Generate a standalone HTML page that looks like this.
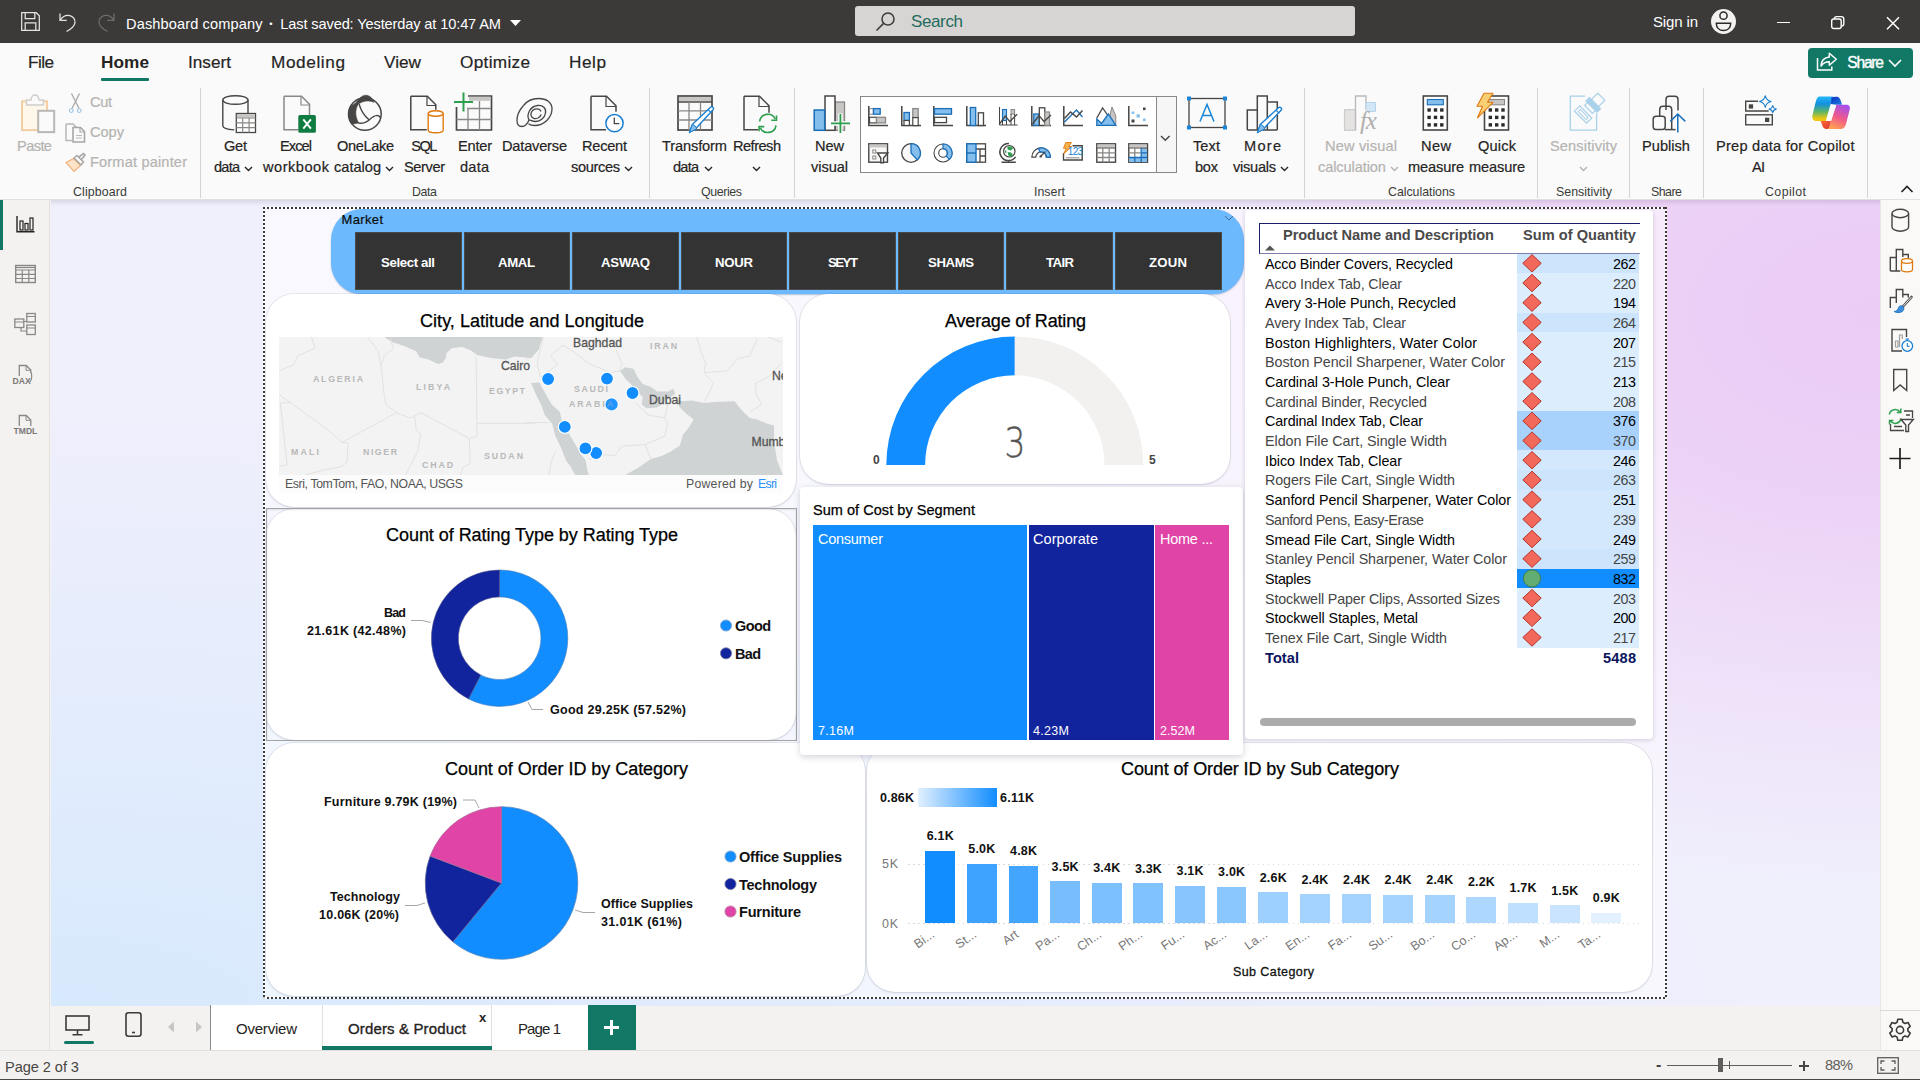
<!DOCTYPE html>
<html lang="en"><head><meta charset="utf-8"><title>Dashboard company - Power BI Desktop</title>
<style>
html,body{margin:0;padding:0;background:#f3f2f1;}
body{width:1920px;height:1080px;overflow:hidden;font-family:"Liberation Sans",sans-serif;}
#app{position:relative;width:1920px;height:1080px;overflow:hidden;background:#f3f2f1;}
#app div,#app span.t,#app svg{position:absolute;box-sizing:border-box;}
span.t{white-space:nowrap;display:block;}
.card{background:#fff;border-radius:28px;box-shadow:0 0 0 .8px rgba(60,60,80,.10),0 1px 2.5px rgba(90,90,120,.16);}
.sep{width:1px;background:#d8d6d4;}
</style></head><body><div id="app">
<div style="left:51px;top:200px;width:1829px;height:805.5px;background:radial-gradient(ellipse 880px 570px at 100% 14%,#ecccf5 0%,rgba(236,204,245,.84) 32%,rgba(236,204,245,.4) 66%,rgba(236,204,245,0) 100%),radial-gradient(ellipse 1700px 600px at 0% 100%,#d7e9fd 0%,rgba(215,233,253,0) 100%),#f0effc;"></div>
<div style="left:51px;top:200px;width:1829px;height:6px;background:linear-gradient(to bottom,rgba(60,60,80,.13),rgba(60,60,80,0));"></div>
<div style="left:263px;top:207px;width:1404px;height:792px;background:rgba(255,255,255,.55);"></div>
<div style="left:263px;top:207px;width:1404px;height:2px;background:repeating-linear-gradient(to right,#3b3a39 0 2px,rgba(255,255,255,.8) 2px 4px);"></div>
<div style="left:263px;top:997px;width:1404px;height:2px;background:repeating-linear-gradient(to right,#3b3a39 0 2px,rgba(255,255,255,.8) 2px 4px);"></div>
<div style="left:263px;top:207px;width:2px;height:792px;background:repeating-linear-gradient(to bottom,#3b3a39 0 2px,rgba(255,255,255,.8) 2px 4px);"></div>
<div style="left:1665px;top:207px;width:2px;height:792px;background:repeating-linear-gradient(to bottom,#3b3a39 0 2px,rgba(255,255,255,.8) 2px 4px);"></div>
<div style="left:330.5px;top:208.5px;width:913.2px;height:85px;background:#6DB9FD;border-radius:31px;box-shadow:0 1px 1.5px rgba(40,90,150,.35);"></div>
<span class="t" style="left:341.5px;top:211.55px;font-size:13px;line-height:16.9px;color:#0b0b0b;letter-spacing:0.353px;-webkit-text-stroke:.2px #0b0b0b;">Market</span>
<svg style="left:1223.5px;top:214.5px" width="10" height="7" viewBox="0 0 10 7" fill="none" stroke="#4d6e92" stroke-width="1"><path d="M1 1l4 4 4-4"/></svg>
<div style="left:355.0px;top:232px;width:106.7px;height:58.3px;background:#333333;border:1px solid #4b4a49;"></div>
<span class="t" style="left:381px;top:254.12px;font-size:13.2px;line-height:17.16px;color:#fff;font-weight:700;letter-spacing:-0.354px;">Select all</span>
<div style="left:463.6px;top:232px;width:106.7px;height:58.3px;background:#333333;border:1px solid #4b4a49;"></div>
<span class="t" style="left:498px;top:254.12px;font-size:13.2px;line-height:17.16px;color:#fff;font-weight:700;letter-spacing:-0.365px;">AMAL</span>
<div style="left:572.1px;top:232px;width:106.7px;height:58.3px;background:#333333;border:1px solid #4b4a49;"></div>
<span class="t" style="left:601px;top:254.12px;font-size:13.2px;line-height:17.16px;color:#fff;font-weight:700;letter-spacing:-0.207px;">ASWAQ</span>
<div style="left:680.7px;top:232px;width:106.7px;height:58.3px;background:#333333;border:1px solid #4b4a49;"></div>
<span class="t" style="left:715px;top:254.12px;font-size:13.2px;line-height:17.16px;color:#fff;font-weight:700;letter-spacing:-0.281px;">NOUR</span>
<div style="left:789.3px;top:232px;width:106.7px;height:58.3px;background:#333333;border:1px solid #4b4a49;"></div>
<span class="t" style="left:828px;top:254.12px;font-size:13.2px;line-height:17.16px;color:#fff;font-weight:700;letter-spacing:-1.484px;">SEYT</span>
<div style="left:897.8px;top:232px;width:106.7px;height:58.3px;background:#333333;border:1px solid #4b4a49;"></div>
<span class="t" style="left:928px;top:254.12px;font-size:13.2px;line-height:17.16px;color:#fff;font-weight:700;letter-spacing:-0.406px;">SHAMS</span>
<div style="left:1006.4px;top:232px;width:106.7px;height:58.3px;background:#333333;border:1px solid #4b4a49;"></div>
<span class="t" style="left:1046px;top:254.12px;font-size:13.2px;line-height:17.16px;color:#fff;font-weight:700;letter-spacing:-0.599px;">TAIR</span>
<div style="left:1115.0px;top:232px;width:106.7px;height:58.3px;background:#333333;border:1px solid #4b4a49;"></div>
<span class="t" style="left:1149px;top:254.12px;font-size:13.2px;line-height:17.16px;color:#fff;font-weight:700;letter-spacing:0.208px;">ZOUN</span>
<div class="card" style="left:266px;top:294.4px;width:530px;height:213px;"></div>
<span class="t" style="left:420px;top:309.5px;font-size:18px;line-height:23.4px;color:#000;letter-spacing:0.043px;-webkit-text-stroke:.25px #000;">City, Latitude and Longitude</span>
<svg style="left:279px;top:337px" width="504" height="156" viewBox="279 337 504 156"><rect x="279" y="337" width="504" height="156" fill="#F3F3F3"/><polygon points="384.3,337.1 391.9,342.1 404.1,345.9 416.2,351.2 419.3,357.3 428.4,359.6 438.2,364.1 442.8,362.6 445.8,358.1 446.6,352.7 451.9,348.2 461.8,346.7 470.9,350.5 477.0,355.0 490.6,358.1 505.8,359.6 514.9,356.5 530.1,358.1 535.0,355.8 525.0,358.8 531.1,358.1 538.7,349.7 542.5,337.1 " fill="#CFD3D4"/><polygon points="531.1,383.1 539.4,382.4 544.7,392.2 551.6,404.4 559.9,412.0 562.2,422.6 570.6,436.3 575.9,445.4 581.2,454.5 585.7,460.6 587.3,469.7 588.8,475.0 575.1,475.0 570.6,466.6 566.0,460.6 561.4,448.4 555.4,436.3 552.3,424.1 544.7,415.0 541.7,405.9 535.6,393.7" fill="#CFD3D4"/><polygon points="619.9,371.0 625.2,367.2 633.6,368.7 637.4,377.0 642.7,383.9 651.0,386.9 657.1,391.5 668.5,391.5 673.1,388.4 675.3,393.7 670.8,396.8 666.2,399.8 661.7,404.4 657.1,407.4 646.5,408.2 641.9,404.4 642.7,396.8 638.1,393.0 631.3,384.6 625.2,378.6 622.2,374.0" fill="#CFD3D4"/><polygon points="675.3,399.8 682.9,401.3 692.0,400.6 704.2,402.9 714.8,402.1 734.6,401.3 740.6,408.9 749.8,418.0 757.3,419.6 768.0,424.1 774.1,425.6 774.1,442.3 777.1,460.6 782.9,475.0 625.2,475.0 637.4,468.2 646.5,462.1 651.0,459.0 661.7,456.0 670.8,451.5 679.9,445.4 682.9,434.7 689.0,427.2 693.6,419.6 686.0,413.5 679.9,407.4" fill="#CFD3D4"/><polyline points="311.4,337.1 315.2,348.2 297.8,355.8 293.2,364.9 279.1,371.0" fill="none" stroke="#E2E2DF" stroke-width="1"/><polyline points="367.6,337.1 378.3,351.2 381.3,367.9 383.6,390.7 385.9,404.4 396.5,412.7 410.2,418.0 420.8,412.7 469.4,438.5 477.0,436.3 476.2,357.3" fill="none" stroke="#E2E2DF" stroke-width="1"/><polyline points="381.3,364.9 384.3,355.8 393.5,348.2 390.4,339.1" fill="none" stroke="#E2E2DF" stroke-width="1"/><polyline points="279.1,394.5 328.2,430.2 341.8,442.3 396.5,412.7" fill="none" stroke="#E2E2DF" stroke-width="1"/><polyline points="280.3,402.9 290.2,402.9" fill="none" stroke="#E2E2DF" stroke-width="1"/><polyline points="280.3,402.9 287.1,465.1 279.1,465.9" fill="none" stroke="#E2E2DF" stroke-width="1"/><polyline points="341.8,442.3 347.9,443.1 347.1,462.1 341.8,466.6 325.1,469.7 305.4,475.0" fill="none" stroke="#E2E2DF" stroke-width="1"/><polyline points="414.7,416.5 416.2,430.2 420.8,434.0 417.7,451.5 405.6,475.0" fill="none" stroke="#E2E2DF" stroke-width="1"/><polyline points="477.0,423.4 535.0,423.4" fill="none" stroke="#E2E2DF" stroke-width="1"/><polyline points="469.4,438.5 470.1,463.6 463.3,466.6 460.3,475.0" fill="none" stroke="#E2E2DF" stroke-width="1"/><polyline points="543.2,337.1 537.1,363.4 540.2,377.0" fill="none" stroke="#E2E2DF" stroke-width="1"/><polyline points="563.0,345.1 550.8,355.8 557.6,364.9 540.2,377.0" fill="none" stroke="#E2E2DF" stroke-width="1"/><polyline points="563.0,345.1 575.1,352.7 588.8,363.4 610.0,372.5 619.2,371.0" fill="none" stroke="#E2E2DF" stroke-width="1"/><polyline points="616.1,349.7 622.2,364.9 619.2,371.0" fill="none" stroke="#E2E2DF" stroke-width="1"/><polyline points="635.9,402.9 648.0,415.0 664.7,418.0 667.7,422.6 664.7,436.3 645.0,444.6 622.2,446.1 614.6,456.0 607.0,454.5 588.8,459.0" fill="none" stroke="#E2E2DF" stroke-width="1"/><polyline points="645.0,444.6 651.0,459.0" fill="none" stroke="#E2E2DF" stroke-width="1"/><polyline points="664.7,418.0 667.7,404.4" fill="none" stroke="#E2E2DF" stroke-width="1"/><polyline points="696.6,337.1 701.2,352.7 705.7,363.4 704.2,372.5 713.3,383.1 707.2,396.8 704.2,402.1" fill="none" stroke="#E2E2DF" stroke-width="1"/><polyline points="704.2,372.5 727.0,371.0 737.6,358.8 749.8,355.8 757.3,339.1" fill="none" stroke="#E2E2DF" stroke-width="1"/><polyline points="768.0,337.1 781.6,342.1" fill="none" stroke="#E2E2DF" stroke-width="1"/><polyline points="781.6,363.4 768.0,377.0 755.8,383.1 755.8,393.7 761.9,404.4 749.8,412.0" fill="none" stroke="#E2E2DF" stroke-width="1"/><polyline points="525.0,422.6 549.3,422.6" fill="none" stroke="#E2E2DF" stroke-width="1"/><polyline points="549.3,475.0 550.8,462.1 555.4,451.5" fill="none" stroke="#E2E2DF" stroke-width="1"/><circle cx="548.1" cy="379" r="6.5" fill="#118DFF" stroke="#fff" stroke-width="1.2" opacity="1"/><circle cx="607" cy="378.6" r="6.5" fill="#118DFF" stroke="#fff" stroke-width="1.2" opacity="1"/><circle cx="632.5" cy="393" r="6.5" fill="#118DFF" stroke="#fff" stroke-width="1.2" opacity="1"/><circle cx="611.6" cy="404.4" r="6.5" fill="#118DFF" stroke="#fff" stroke-width="1.2" opacity="0.85"/><circle cx="564.8" cy="426.9" r="6.5" fill="#118DFF" stroke="#fff" stroke-width="1.2" opacity="1"/><circle cx="596.1" cy="453" r="6.5" fill="#118DFF" stroke="#fff" stroke-width="1.2" opacity="1"/><circle cx="585.4" cy="448.4" r="6.5" fill="#118DFF" stroke="#fff" stroke-width="1.2" opacity="1"/><rect x="279" y="475" width="504" height="18" fill="#fff" fill-opacity=".72"/></svg>
<span class="t" style="left:313px;top:374.48px;font-size:8.8px;line-height:11.44px;color:#b8b8b8;font-weight:700;letter-spacing:1.734px;">ALGERIA</span>
<span class="t" style="left:416px;top:381.98px;font-size:8.8px;line-height:11.44px;color:#b8b8b8;font-weight:700;letter-spacing:2.102px;">LIBYA</span>
<span class="t" style="left:489px;top:385.98px;font-size:8.8px;line-height:11.44px;color:#b8b8b8;font-weight:700;letter-spacing:1.543px;">EGYPT</span>
<span class="t" style="left:291px;top:446.98px;font-size:8.8px;line-height:11.44px;color:#b8b8b8;font-weight:700;letter-spacing:2.167px;">MALI</span>
<span class="t" style="left:363px;top:447.48px;font-size:8.8px;line-height:11.44px;color:#b8b8b8;font-weight:700;letter-spacing:1.531px;">NIGER</span>
<span class="t" style="left:422px;top:460.48px;font-size:8.8px;line-height:11.44px;color:#b8b8b8;font-weight:700;letter-spacing:1.859px;">CHAD</span>
<span class="t" style="left:484px;top:450.98px;font-size:8.8px;line-height:11.44px;color:#b8b8b8;font-weight:700;letter-spacing:1.93px;">SUDAN</span>
<span class="t" style="left:574px;top:384.48px;font-size:8.8px;line-height:11.44px;color:#b8b8b8;font-weight:700;letter-spacing:1.656px;">SAUDI</span>
<span class="t" style="left:569px;top:399.48px;font-size:8.8px;line-height:11.44px;color:#b8b8b8;font-weight:700;letter-spacing:1.956px;">ARABIA</span>
<span class="t" style="left:650px;top:341.48px;font-size:8.8px;line-height:11.44px;color:#b8b8b8;font-weight:700;letter-spacing:1.828px;">IRAN</span>
<svg style="left:603px;top:396px" width="18" height="18" viewBox="0 0 18 18"><circle cx="8.6" cy="8.4" r="6.2" fill="#118DFF" fill-opacity=".55"/></svg>
<span class="t" style="left:501px;top:359.27px;font-size:12.2px;line-height:15.86px;color:#555;letter-spacing:-0.031px;-webkit-text-stroke:.3px #555;">Cairo</span>
<span class="t" style="left:573px;top:335.97px;font-size:12.2px;line-height:15.86px;color:#555;letter-spacing:0.031px;-webkit-text-stroke:.3px #555;">Baghdad</span>
<span class="t" style="left:649px;top:392.77px;font-size:12.2px;line-height:15.86px;color:#555;letter-spacing:0.039px;-webkit-text-stroke:.3px #555;">Dubai</span>
<div style="left:279px;top:337px;width:504px;height:156px;overflow:hidden;background:transparent;"><span class="t" style="left:472.5px;top:96.5px;font-size:12.2px;line-height:16px;color:#555;-webkit-text-stroke:.3px #555;">Mumbai</span><span class="t" style="left:493px;top:31px;font-size:12.2px;line-height:16px;color:#555;-webkit-text-stroke:.3px #555;">New</span></div>
<span class="t" style="left:285px;top:477.2px;font-size:12.3px;line-height:15.99px;color:#555;letter-spacing:-0.395px;">Esri, TomTom, FAO, NOAA, USGS</span>
<span class="t" style="left:686px;top:477.2px;font-size:12.3px;line-height:15.99px;color:#555;letter-spacing:0.229px;">Powered by</span>
<span class="t" style="left:758px;top:477.2px;font-size:12.3px;line-height:15.99px;color:#2a8fff;letter-spacing:-0.729px;">Esri</span>
<div class="card" style="left:800px;top:294.4px;width:430px;height:189.6px"></div>
<span class="t" style="left:945px;top:309.5px;font-size:18px;line-height:23.4px;color:#000;letter-spacing:-0.173px;-webkit-text-stroke:.25px #000;">Average of Rating</span>
<svg style="left:0;top:0" width="1920" height="1080" viewBox="0 0 1920 1080"><path d="M886.3 465.00A128.5 128.5 0 0 1 1014.8 336.5L1014.8 375.3A89.7 89.7 0 0 0 925.1 465.00Z" fill="#118DFF"/><path d="M1014.8 336.5A128.5 128.5 0 0 1 1143.3 465.00L1104.5 465.00A89.7 89.7 0 0 0 1014.8 375.3Z" fill="#F2F1EF"/></svg>
<span class="t" style="left:873px;top:452.9px;font-size:12px;line-height:15.6px;color:#444;font-weight:700;">0</span>
<span class="t" style="left:1149px;top:452.9px;font-size:12px;line-height:15.6px;color:#444;font-weight:700;">5</span>
<span class="t" style="left:1001.8px;top:417.15px;font-size:41px;line-height:53.3px;color:#555;font-weight:200;-webkit-text-stroke:.45px #555;font-family:'DejaVu Sans','Liberation Sans',sans-serif;transform:scaleX(.8);transform-origin:50% 50%;">3</span>
<div class="card" style="left:266px;top:509px;width:530px;height:231px"></div>
<div style="left:265.5px;top:508px;width:531.5px;height:233.3px;border:1px solid #a3a3a3;box-shadow:inset 0 1px 2px rgba(0,0,0,.10);"></div>
<span class="t" style="left:386px;top:524.0px;font-size:18px;line-height:23.4px;color:#000;letter-spacing:-0.045px;-webkit-text-stroke:.25px #000;">Count of Rating Type by Rating Type</span>
<svg style="left:0;top:0" width="1920" height="1080" viewBox="0 0 1920 1080"><path d="M499.6 570.00A68.2 68.2 0 1 1 468.56 698.93L480.8 674.97A41.3 41.3 0 1 0 499.6 596.9Z" fill="#118DFF" stroke="#4c7fb5" stroke-width=".6"/><path d="M468.56 698.93A68.2 68.2 0 0 1 499.6 570.00L499.6 596.9A41.3 41.3 0 0 0 480.8 674.97Z" fill="#12239E" stroke="#555a88" stroke-width=".6"/><path d="M411 620.5h11l9 2" fill="none" stroke="#a6a6a6" stroke-width="1"/><path d="M528 702l4 7.5h11" fill="none" stroke="#a6a6a6" stroke-width="1"/><circle cx="726" cy="625.5" r="5.6" fill="#118DFF" stroke="#8da8c4" stroke-width=".8"/><circle cx="726" cy="653.3" r="5.6" fill="#12239E" stroke="#7a7f9e" stroke-width=".8"/></svg>
<span class="t" style="left:384px;top:605.08px;font-size:12.5px;line-height:16.25px;color:#111;font-weight:700;letter-spacing:-0.812px;">Bad</span>
<span class="t" style="left:307px;top:623.08px;font-size:12.5px;line-height:16.25px;color:#111;font-weight:700;letter-spacing:0.32px;">21.61K (42.48%)</span>
<span class="t" style="left:550px;top:702.08px;font-size:12.5px;line-height:16.25px;color:#111;font-weight:700;letter-spacing:0.284px;">Good 29.25K (57.52%)</span>
<span class="t" style="left:735px;top:617.28px;font-size:14.5px;line-height:18.85px;color:#111;font-weight:700;letter-spacing:-0.62px;">Good</span>
<span class="t" style="left:735px;top:644.78px;font-size:14.5px;line-height:18.85px;color:#111;font-weight:700;letter-spacing:-0.703px;">Bad</span>
<div class="card" style="left:266px;top:743px;width:599px;height:253px"></div>
<div class="card" style="left:867px;top:743px;width:785px;height:249px"></div>
<div style="left:800px;top:487px;width:443px;height:268px;background:#fff;border-radius:4px;box-shadow:0 2px 6px rgba(80,80,110,.25);"></div>
<span class="t" style="left:813px;top:501.27px;font-size:14.5px;line-height:18.85px;color:#000;letter-spacing:0.039px;-webkit-text-stroke:.25px #000;">Sum of Cost by Segment</span>
<div style="left:813.3px;top:524.5px;width:213.7px;height:215.3px;background:#118DFF;"></div>
<div style="left:1028.5px;top:524.5px;width:125px;height:215.3px;background:#12239E;"></div>
<div style="left:1155px;top:524.5px;width:74px;height:215.3px;background:#E044A7;"></div>
<span class="t" style="left:818px;top:530.28px;font-size:14.5px;line-height:18.85px;color:#fff;letter-spacing:-0.27px;">Consumer</span>
<span class="t" style="left:1033px;top:530.28px;font-size:14.5px;line-height:18.85px;color:#fff;letter-spacing:0.064px;">Corporate</span>
<span class="t" style="left:1160px;top:530.28px;font-size:14.5px;line-height:18.85px;color:#fff;letter-spacing:-0.257px;">Home ...</span>
<span class="t" style="left:818px;top:723.08px;font-size:12.5px;line-height:16.25px;color:#fff;letter-spacing:0.312px;">7.16M</span>
<span class="t" style="left:1033px;top:723.08px;font-size:12.5px;line-height:16.25px;color:#fff;letter-spacing:0.312px;">4.23M</span>
<span class="t" style="left:1160px;top:723.08px;font-size:12.5px;line-height:16.25px;color:#fff;letter-spacing:0.062px;">2.52M</span>
<span class="t" style="left:445px;top:758.0px;font-size:18px;line-height:23.4px;color:#000;letter-spacing:-0.04px;-webkit-text-stroke:.25px #000;">Count of Order ID by Category</span>
<svg style="left:0;top:0" width="1920" height="1080" viewBox="0 0 1920 1080"><path d="M501.5 883L501.5 806.7A76.3 76.3 0 1 1 452.97 941.88Z" fill="#118DFF" stroke="#5b86b5" stroke-width=".7"/><path d="M501.5 883L452.97 941.88A76.3 76.3 0 0 1 430.13 856.03Z" fill="#12239E" stroke="#6b6f96" stroke-width=".7"/><path d="M501.5 883L430.13 856.03A76.3 76.3 0 0 1 501.5 806.7Z" fill="#E044A7" stroke="#a86c93" stroke-width=".7"/><path d="M463 800h12l4 8" fill="none" stroke="#a6a6a6" stroke-width="1"/><path d="M405 905.5h12l8-2.5" fill="none" stroke="#a6a6a6" stroke-width="1"/><path d="M575 910l8 2.5h12" fill="none" stroke="#a6a6a6" stroke-width="1"/><circle cx="730.5" cy="856.5" r="5.6" fill="#118DFF" stroke="#8da8c4" stroke-width=".8"/><circle cx="730.5" cy="884" r="5.6" fill="#12239E" stroke="#7a7f9e" stroke-width=".8"/><circle cx="730.5" cy="911.5" r="5.6" fill="#E044A7" stroke="#b58aa6" stroke-width=".8"/></svg>
<span class="t" style="left:324px;top:794.08px;font-size:12.5px;line-height:16.25px;color:#111;font-weight:700;letter-spacing:0.224px;">Furniture 9.79K (19%)</span>
<span class="t" style="left:330px;top:889.38px;font-size:12.5px;line-height:16.25px;color:#111;font-weight:700;letter-spacing:0.087px;">Technology</span>
<span class="t" style="left:319px;top:907.48px;font-size:12.5px;line-height:16.25px;color:#111;font-weight:700;letter-spacing:0.261px;">10.06K (20%)</span>
<span class="t" style="left:601px;top:896.38px;font-size:12.5px;line-height:16.25px;color:#111;font-weight:700;letter-spacing:0.071px;">Office Supplies</span>
<span class="t" style="left:601px;top:914.48px;font-size:12.5px;line-height:16.25px;color:#111;font-weight:700;letter-spacing:0.352px;">31.01K (61%)</span>
<span class="t" style="left:739px;top:848.28px;font-size:14.5px;line-height:18.85px;color:#111;font-weight:700;letter-spacing:-0.183px;">Office Supplies</span>
<span class="t" style="left:739px;top:875.78px;font-size:14.5px;line-height:18.85px;color:#111;font-weight:700;letter-spacing:-0.255px;">Technology</span>
<span class="t" style="left:739px;top:903.28px;font-size:14.5px;line-height:18.85px;color:#111;font-weight:700;letter-spacing:-0.205px;">Furniture</span>
<span class="t" style="left:1121px;top:758.0px;font-size:18px;line-height:23.4px;color:#000;letter-spacing:-0.098px;-webkit-text-stroke:.25px #000;">Count of Order ID by Sub Category</span>
<span class="t" style="left:880px;top:790.08px;font-size:12.5px;line-height:16.25px;color:#111;font-weight:700;letter-spacing:0.16px;">0.86K</span>
<span class="t" style="left:1000px;top:790.08px;font-size:12.5px;line-height:16.25px;color:#111;font-weight:700;letter-spacing:0.332px;">6.11K</span>
<div style="left:918px;top:787.7px;width:79px;height:19.7px;background:linear-gradient(to right,#e2f0ff,#118DFF);"></div>
<span class="t" style="left:882px;top:856.08px;font-size:12.5px;line-height:16.25px;color:#777;letter-spacing:0.703px;">5K</span>
<span class="t" style="left:882px;top:916.08px;font-size:12.5px;line-height:16.25px;color:#777;letter-spacing:0.703px;">0K</span>
<div style="left:908px;top:863.5px;width:734px;height:1px;background:repeating-linear-gradient(to right,#d9d9d9 0 1.5px,transparent 1.5px 5px);"></div>
<div style="left:908px;top:922.8px;width:734px;height:1px;background:repeating-linear-gradient(to right,#d9d9d9 0 1.5px,transparent 1.5px 5px);"></div>
<div style="left:925.2px;top:850.6px;width:29.9px;height:72.2px;background:#118dff;"></div>
<span class="t" style="left:926.7px;top:828.18px;font-size:12.5px;line-height:16.25px;color:#111;font-weight:700;letter-spacing:0.198px;">6.1K</span>
<span class="t" style="left:903.2px;top:925.5px;width:30px;text-align:right;font-size:12.5px;line-height:14px;color:#777;transform:rotate(-35deg);transform-origin:100% 50%;">Bi...</span>
<div style="left:966.8px;top:863.9px;width:29.9px;height:58.9px;background:#3ea2ff;"></div>
<span class="t" style="left:968.3px;top:841.48px;font-size:12.5px;line-height:16.25px;color:#111;font-weight:700;letter-spacing:0.198px;">5.0K</span>
<span class="t" style="left:944.8px;top:925.5px;width:30px;text-align:right;font-size:12.5px;line-height:14px;color:#777;transform:rotate(-35deg);transform-origin:100% 50%;">St...</span>
<div style="left:1008.5px;top:865.7px;width:29.9px;height:57.1px;background:#44a5ff;"></div>
<span class="t" style="left:1010.0px;top:843.28px;font-size:12.5px;line-height:16.25px;color:#111;font-weight:700;letter-spacing:0.198px;">4.8K</span>
<span class="t" style="left:986.5px;top:925.5px;width:30px;text-align:right;font-size:12.5px;line-height:14px;color:#777;transform:rotate(-35deg);transform-origin:100% 50%;">Art</span>
<div style="left:1050.1px;top:881.2px;width:29.9px;height:41.6px;background:#78beff;"></div>
<span class="t" style="left:1051.6px;top:858.78px;font-size:12.5px;line-height:16.25px;color:#111;font-weight:700;letter-spacing:0.198px;">3.5K</span>
<span class="t" style="left:1028.1px;top:925.5px;width:30px;text-align:right;font-size:12.5px;line-height:14px;color:#777;transform:rotate(-35deg);transform-origin:100% 50%;">Pa...</span>
<div style="left:1091.7px;top:882.5px;width:29.9px;height:40.3px;background:#7cc0ff;"></div>
<span class="t" style="left:1093.2px;top:860.08px;font-size:12.5px;line-height:16.25px;color:#111;font-weight:700;letter-spacing:0.198px;">3.4K</span>
<span class="t" style="left:1069.7px;top:925.5px;width:30px;text-align:right;font-size:12.5px;line-height:14px;color:#777;transform:rotate(-35deg);transform-origin:100% 50%;">Ch...</span>
<div style="left:1133.4px;top:883.4px;width:29.9px;height:39.4px;background:#80c1ff;"></div>
<span class="t" style="left:1134.9px;top:860.98px;font-size:12.5px;line-height:16.25px;color:#111;font-weight:700;letter-spacing:0.198px;">3.3K</span>
<span class="t" style="left:1111.4px;top:925.5px;width:30px;text-align:right;font-size:12.5px;line-height:14px;color:#777;transform:rotate(-35deg);transform-origin:100% 50%;">Ph...</span>
<div style="left:1175.0px;top:885.8px;width:29.9px;height:37.0px;background:#88c5ff;"></div>
<span class="t" style="left:1176.5px;top:863.38px;font-size:12.5px;line-height:16.25px;color:#111;font-weight:700;letter-spacing:0.198px;">3.1K</span>
<span class="t" style="left:1153.0px;top:925.5px;width:30px;text-align:right;font-size:12.5px;line-height:14px;color:#777;transform:rotate(-35deg);transform-origin:100% 50%;">Fu...</span>
<div style="left:1216.6px;top:886.9px;width:29.9px;height:35.9px;background:#8bc7ff;"></div>
<span class="t" style="left:1218.1px;top:864.48px;font-size:12.5px;line-height:16.25px;color:#111;font-weight:700;letter-spacing:0.198px;">3.0K</span>
<span class="t" style="left:1194.6px;top:925.5px;width:30px;text-align:right;font-size:12.5px;line-height:14px;color:#777;transform:rotate(-35deg);transform-origin:100% 50%;">Ac...</span>
<div style="left:1258.2px;top:892.4px;width:29.9px;height:30.4px;background:#9ed0ff;"></div>
<span class="t" style="left:1259.7px;top:869.98px;font-size:12.5px;line-height:16.25px;color:#111;font-weight:700;letter-spacing:0.198px;">2.6K</span>
<span class="t" style="left:1236.2px;top:925.5px;width:30px;text-align:right;font-size:12.5px;line-height:14px;color:#777;transform:rotate(-35deg);transform-origin:100% 50%;">La...</span>
<div style="left:1299.9px;top:894.3px;width:29.9px;height:28.5px;background:#a4d3ff;"></div>
<span class="t" style="left:1301.4px;top:871.88px;font-size:12.5px;line-height:16.25px;color:#111;font-weight:700;letter-spacing:0.198px;">2.4K</span>
<span class="t" style="left:1277.9px;top:925.5px;width:30px;text-align:right;font-size:12.5px;line-height:14px;color:#777;transform:rotate(-35deg);transform-origin:100% 50%;">En...</span>
<div style="left:1341.5px;top:894.4px;width:29.9px;height:28.4px;background:#a5d3ff;"></div>
<span class="t" style="left:1343.0px;top:871.98px;font-size:12.5px;line-height:16.25px;color:#111;font-weight:700;letter-spacing:0.198px;">2.4K</span>
<span class="t" style="left:1319.5px;top:925.5px;width:30px;text-align:right;font-size:12.5px;line-height:14px;color:#777;transform:rotate(-35deg);transform-origin:100% 50%;">Fa...</span>
<div style="left:1383.1px;top:894.6px;width:29.9px;height:28.2px;background:#a5d3ff;"></div>
<span class="t" style="left:1384.6px;top:872.18px;font-size:12.5px;line-height:16.25px;color:#111;font-weight:700;letter-spacing:0.198px;">2.4K</span>
<span class="t" style="left:1361.1px;top:925.5px;width:30px;text-align:right;font-size:12.5px;line-height:14px;color:#777;transform:rotate(-35deg);transform-origin:100% 50%;">Su...</span>
<div style="left:1424.8px;top:894.7px;width:29.9px;height:28.1px;background:#a5d3ff;"></div>
<span class="t" style="left:1426.3px;top:872.28px;font-size:12.5px;line-height:16.25px;color:#111;font-weight:700;letter-spacing:0.198px;">2.4K</span>
<span class="t" style="left:1402.8px;top:925.5px;width:30px;text-align:right;font-size:12.5px;line-height:14px;color:#777;transform:rotate(-35deg);transform-origin:100% 50%;">Bo...</span>
<div style="left:1466.4px;top:896.9px;width:29.9px;height:25.9px;background:#add7ff;"></div>
<span class="t" style="left:1467.9px;top:874.48px;font-size:12.5px;line-height:16.25px;color:#111;font-weight:700;letter-spacing:0.198px;">2.2K</span>
<span class="t" style="left:1444.4px;top:925.5px;width:30px;text-align:right;font-size:12.5px;line-height:14px;color:#777;transform:rotate(-35deg);transform-origin:100% 50%;">Co...</span>
<div style="left:1508.0px;top:902.5px;width:29.9px;height:20.3px;background:#c0e0ff;"></div>
<span class="t" style="left:1509.5px;top:880.08px;font-size:12.5px;line-height:16.25px;color:#111;font-weight:700;letter-spacing:0.198px;">1.7K</span>
<span class="t" style="left:1486.0px;top:925.5px;width:30px;text-align:right;font-size:12.5px;line-height:14px;color:#777;transform:rotate(-35deg);transform-origin:100% 50%;">Ap...</span>
<div style="left:1549.7px;top:905.4px;width:29.9px;height:17.4px;background:#cae4ff;"></div>
<span class="t" style="left:1551.2px;top:882.98px;font-size:12.5px;line-height:16.25px;color:#111;font-weight:700;letter-spacing:0.198px;">1.5K</span>
<span class="t" style="left:1527.7px;top:925.5px;width:30px;text-align:right;font-size:12.5px;line-height:14px;color:#777;transform:rotate(-35deg);transform-origin:100% 50%;">M...</span>
<div style="left:1591.3px;top:912.6px;width:29.9px;height:10.2px;background:#e2f0ff;"></div>
<span class="t" style="left:1592.8px;top:890.18px;font-size:12.5px;line-height:16.25px;color:#111;font-weight:700;letter-spacing:0.198px;">0.9K</span>
<span class="t" style="left:1569.3px;top:925.5px;width:30px;text-align:right;font-size:12.5px;line-height:14px;color:#777;transform:rotate(-35deg);transform-origin:100% 50%;">Ta...</span>
<span class="t" style="left:1233px;top:964.08px;font-size:12.5px;line-height:16.25px;color:#111;letter-spacing:0.415px;-webkit-text-stroke:.3px #111;">Sub Category</span>
<div style="left:1245px;top:210px;width:408px;height:529px;background:#fff;border-radius:4px;box-shadow:0 1px 4px rgba(80,80,110,.25);"></div>
<div style="left:1259px;top:223px;width:381px;height:30.5px;border:1px solid #1a2168;border-right:none;border-bottom:1px solid #7a7fb0;"></div>
<svg style="left:1265px;top:245px" width="10" height="6" viewBox="0 0 10 6"><path d="M0 5.5L5 .5l5 5z" fill="#555"/></svg>
<span class="t" style="left:1283px;top:226.21px;font-size:14.6px;line-height:18.98px;color:#4a4a4a;font-weight:700;letter-spacing:-0.084px;">Product Name and Description</span>
<span class="t" style="left:1523px;top:226.21px;font-size:14.6px;line-height:18.98px;color:#4a4a4a;font-weight:700;letter-spacing:0.021px;">Sum of Quantity</span>
<div style="left:1516.7px;top:253.5px;width:122.5px;height:19.99px;background:#CCE5FD;"></div>
<span class="t" style="left:1265px;top:254.8px;font-size:14.3px;line-height:18.59px;color:#000;letter-spacing:-0.189px;">Acco Binder Covers, Recycled</span>
<span class="t" style="left:1613px;top:254.8px;font-size:14.3px;line-height:18.59px;color:#000;letter-spacing:-0.43px;">262</span>
<div style="left:1516.7px;top:273.19px;width:122.5px;height:19.99px;background:#DCEDFE;"></div>
<span class="t" style="left:1265px;top:274.5px;font-size:14.3px;line-height:18.59px;color:#454545;letter-spacing:-0.13px;">Acco Index Tab, Clear</span>
<span class="t" style="left:1613px;top:274.5px;font-size:14.3px;line-height:18.59px;color:#454545;letter-spacing:-0.43px;">220</span>
<div style="left:1516.7px;top:292.88px;width:122.5px;height:19.99px;background:#DCEDFE;"></div>
<span class="t" style="left:1265px;top:294.2px;font-size:14.3px;line-height:18.59px;color:#000;letter-spacing:-0.098px;">Avery 3-Hole Punch, Recycled</span>
<span class="t" style="left:1613px;top:294.2px;font-size:14.3px;line-height:18.59px;color:#000;letter-spacing:-0.43px;">194</span>
<div style="left:1516.7px;top:312.57px;width:122.5px;height:19.99px;background:#CCE5FD;"></div>
<span class="t" style="left:1265px;top:313.9px;font-size:14.3px;line-height:18.59px;color:#454545;letter-spacing:-0.148px;">Avery Index Tab, Clear</span>
<span class="t" style="left:1613px;top:313.9px;font-size:14.3px;line-height:18.59px;color:#454545;letter-spacing:-0.43px;">264</span>
<div style="left:1516.7px;top:332.26px;width:122.5px;height:19.99px;background:#DCEDFE;"></div>
<span class="t" style="left:1265px;top:333.6px;font-size:14.3px;line-height:18.59px;color:#000;letter-spacing:0.14px;">Boston Highlighters, Water Color</span>
<span class="t" style="left:1613px;top:333.6px;font-size:14.3px;line-height:18.59px;color:#000;letter-spacing:-0.43px;">207</span>
<div style="left:1516.7px;top:351.95px;width:122.5px;height:19.99px;background:#DCEDFE;"></div>
<span class="t" style="left:1265px;top:353.3px;font-size:14.3px;line-height:18.59px;color:#454545;letter-spacing:-0.03px;">Boston Pencil Sharpener, Water Color</span>
<span class="t" style="left:1613px;top:353.3px;font-size:14.3px;line-height:18.59px;color:#454545;letter-spacing:-0.43px;">215</span>
<div style="left:1516.7px;top:371.64px;width:122.5px;height:19.99px;background:#DCEDFE;"></div>
<span class="t" style="left:1265px;top:373.0px;font-size:14.3px;line-height:18.59px;color:#000;letter-spacing:-0.035px;">Cardinal 3-Hole Punch, Clear</span>
<span class="t" style="left:1613px;top:373.0px;font-size:14.3px;line-height:18.59px;color:#000;letter-spacing:-0.43px;">213</span>
<div style="left:1516.7px;top:391.33px;width:122.5px;height:19.99px;background:#DCEDFE;"></div>
<span class="t" style="left:1265px;top:392.7px;font-size:14.3px;line-height:18.59px;color:#454545;letter-spacing:-0.104px;">Cardinal Binder, Recycled</span>
<span class="t" style="left:1613px;top:392.7px;font-size:14.3px;line-height:18.59px;color:#454545;letter-spacing:-0.43px;">208</span>
<div style="left:1516.7px;top:411.02px;width:122.5px;height:19.99px;background:#A8D2FC;"></div>
<span class="t" style="left:1265px;top:412.4px;font-size:14.3px;line-height:18.59px;color:#000;letter-spacing:-0.128px;">Cardinal Index Tab, Clear</span>
<span class="t" style="left:1613px;top:412.4px;font-size:14.3px;line-height:18.59px;color:#000;letter-spacing:-0.43px;">376</span>
<div style="left:1516.7px;top:430.71px;width:122.5px;height:19.99px;background:#A8D2FC;"></div>
<span class="t" style="left:1265px;top:432.1px;font-size:14.3px;line-height:18.59px;color:#454545;letter-spacing:-0.027px;">Eldon File Cart, Single Width</span>
<span class="t" style="left:1613px;top:432.1px;font-size:14.3px;line-height:18.59px;color:#454545;letter-spacing:-0.43px;">370</span>
<div style="left:1516.7px;top:450.4px;width:122.5px;height:19.99px;background:#D3E8FD;"></div>
<span class="t" style="left:1265px;top:451.7px;font-size:14.3px;line-height:18.59px;color:#000;letter-spacing:-0.049px;">Ibico Index Tab, Clear</span>
<span class="t" style="left:1613px;top:451.7px;font-size:14.3px;line-height:18.59px;color:#000;letter-spacing:-0.43px;">246</span>
<div style="left:1516.7px;top:470.09px;width:122.5px;height:19.99px;background:#CCE5FD;"></div>
<span class="t" style="left:1265px;top:471.4px;font-size:14.3px;line-height:18.59px;color:#454545;letter-spacing:-0.079px;">Rogers File Cart, Single Width</span>
<span class="t" style="left:1613px;top:471.4px;font-size:14.3px;line-height:18.59px;color:#454545;letter-spacing:-0.43px;">263</span>
<div style="left:1516.7px;top:489.78px;width:122.5px;height:19.99px;background:#D3E8FD;"></div>
<span class="t" style="left:1265px;top:491.1px;font-size:14.3px;line-height:18.59px;color:#000;letter-spacing:-0.017px;">Sanford Pencil Sharpener, Water Color</span>
<span class="t" style="left:1613px;top:491.1px;font-size:14.3px;line-height:18.59px;color:#000;letter-spacing:-0.43px;">251</span>
<div style="left:1516.7px;top:509.47px;width:122.5px;height:19.99px;background:#D3E8FD;"></div>
<span class="t" style="left:1265px;top:510.8px;font-size:14.3px;line-height:18.59px;color:#454545;letter-spacing:-0.412px;">Sanford Pens, Easy-Erase</span>
<span class="t" style="left:1613px;top:510.8px;font-size:14.3px;line-height:18.59px;color:#454545;letter-spacing:-0.43px;">239</span>
<div style="left:1516.7px;top:529.16px;width:122.5px;height:19.99px;background:#D3E8FD;"></div>
<span class="t" style="left:1265px;top:530.51px;font-size:14.3px;line-height:18.59px;color:#000;letter-spacing:-0.054px;">Smead File Cart, Single Width</span>
<span class="t" style="left:1613px;top:530.51px;font-size:14.3px;line-height:18.59px;color:#000;letter-spacing:-0.43px;">249</span>
<div style="left:1516.7px;top:548.85px;width:122.5px;height:19.99px;background:#CCE5FD;"></div>
<span class="t" style="left:1265px;top:550.21px;font-size:14.3px;line-height:18.59px;color:#454545;letter-spacing:-0.062px;">Stanley Pencil Sharpener, Water Color</span>
<span class="t" style="left:1613px;top:550.21px;font-size:14.3px;line-height:18.59px;color:#454545;letter-spacing:-0.43px;">259</span>
<div style="left:1516.7px;top:568.54px;width:122.5px;height:19.99px;background:#118DFF;"></div>
<span class="t" style="left:1265px;top:569.91px;font-size:14.3px;line-height:18.59px;color:#000;letter-spacing:-0.281px;">Staples</span>
<span class="t" style="left:1613px;top:569.91px;font-size:14.3px;line-height:18.59px;color:#000;letter-spacing:-0.43px;">832</span>
<div style="left:1516.7px;top:588.23px;width:122.5px;height:19.99px;background:#DCEDFE;"></div>
<span class="t" style="left:1265px;top:589.61px;font-size:14.3px;line-height:18.59px;color:#454545;letter-spacing:-0.16px;">Stockwell Paper Clips, Assorted Sizes</span>
<span class="t" style="left:1613px;top:589.61px;font-size:14.3px;line-height:18.59px;color:#454545;letter-spacing:-0.43px;">203</span>
<div style="left:1516.7px;top:607.92px;width:122.5px;height:19.99px;background:#DCEDFE;"></div>
<span class="t" style="left:1265px;top:609.31px;font-size:14.3px;line-height:18.59px;color:#000;letter-spacing:-0.085px;">Stockwell Staples, Metal</span>
<span class="t" style="left:1613px;top:609.31px;font-size:14.3px;line-height:18.59px;color:#000;letter-spacing:-0.43px;">200</span>
<div style="left:1516.7px;top:627.61px;width:122.5px;height:19.99px;background:#DCEDFE;"></div>
<span class="t" style="left:1265px;top:629.01px;font-size:14.3px;line-height:18.59px;color:#454545;letter-spacing:-0.084px;">Tenex File Cart, Single Width</span>
<span class="t" style="left:1613px;top:629.01px;font-size:14.3px;line-height:18.59px;color:#454545;letter-spacing:-0.43px;">217</span>
<svg style="left:0;top:0" width="1920" height="1080" viewBox="0 0 1920 1080"><path d="M1522.8 263.3L1532 254.6L1541.2 263.3L1532 272.0Z" fill="#F2695C" stroke="#b5352b" stroke-width="1"/><path d="M1522.8 283.0L1532 274.3L1541.2 283.0L1532 291.7Z" fill="#F2695C" stroke="#b5352b" stroke-width="1"/><path d="M1522.8 302.7L1532 294.0L1541.2 302.7L1532 311.4Z" fill="#F2695C" stroke="#b5352b" stroke-width="1"/><path d="M1522.8 322.4L1532 313.7L1541.2 322.4L1532 331.1Z" fill="#F2695C" stroke="#b5352b" stroke-width="1"/><path d="M1522.8 342.1L1532 333.4L1541.2 342.1L1532 350.8Z" fill="#F2695C" stroke="#b5352b" stroke-width="1"/><path d="M1522.8 361.8L1532 353.1L1541.2 361.8L1532 370.5Z" fill="#F2695C" stroke="#b5352b" stroke-width="1"/><path d="M1522.8 381.5L1532 372.8L1541.2 381.5L1532 390.2Z" fill="#F2695C" stroke="#b5352b" stroke-width="1"/><path d="M1522.8 401.2L1532 392.5L1541.2 401.2L1532 409.9Z" fill="#F2695C" stroke="#b5352b" stroke-width="1"/><path d="M1522.8 420.9L1532 412.2L1541.2 420.9L1532 429.6Z" fill="#F2695C" stroke="#b5352b" stroke-width="1"/><path d="M1522.8 440.6L1532 431.9L1541.2 440.6L1532 449.3Z" fill="#F2695C" stroke="#b5352b" stroke-width="1"/><path d="M1522.8 460.2L1532 451.5L1541.2 460.2L1532 468.9Z" fill="#F2695C" stroke="#b5352b" stroke-width="1"/><path d="M1522.8 479.9L1532 471.2L1541.2 479.9L1532 488.6Z" fill="#F2695C" stroke="#b5352b" stroke-width="1"/><path d="M1522.8 499.6L1532 490.9L1541.2 499.6L1532 508.3Z" fill="#F2695C" stroke="#b5352b" stroke-width="1"/><path d="M1522.8 519.3L1532 510.6L1541.2 519.3L1532 528.0Z" fill="#F2695C" stroke="#b5352b" stroke-width="1"/><path d="M1522.8 539.0L1532 530.3L1541.2 539.0L1532 547.7Z" fill="#F2695C" stroke="#b5352b" stroke-width="1"/><path d="M1522.8 558.7L1532 550.0L1541.2 558.7L1532 567.4Z" fill="#F2695C" stroke="#b5352b" stroke-width="1"/><circle cx="1532" cy="578.4" r="8.6" fill="#62AD74" stroke="#3c7a4c" stroke-width="1"/><path d="M1522.8 598.1L1532 589.4L1541.2 598.1L1532 606.8Z" fill="#F2695C" stroke="#b5352b" stroke-width="1"/><path d="M1522.8 617.8L1532 609.1L1541.2 617.8L1532 626.5Z" fill="#F2695C" stroke="#b5352b" stroke-width="1"/><path d="M1522.8 637.5L1532 628.8L1541.2 637.5L1532 646.2Z" fill="#F2695C" stroke="#b5352b" stroke-width="1"/></svg>
<span class="t" style="left:1265px;top:648.71px;font-size:14.6px;line-height:18.98px;color:#0b1560;font-weight:700;letter-spacing:0.055px;">Total</span>
<span class="t" style="left:1603px;top:648.71px;font-size:14.6px;line-height:18.98px;color:#0b1560;font-weight:700;letter-spacing:0.177px;">5488</span>
<div style="left:1259.5px;top:717.5px;width:376.5px;height:8.5px;background:#ababab;border-radius:4.5px;"></div>
<div style="left:0px;top:0px;width:1920px;height:43px;background:#3b3a39;"></div>
<svg style="left:20px;top:11px" width="21" height="21" viewBox="0 0 21 21" fill="none" stroke="#e6e4e2" stroke-width="1.25"><path d="M1.7 1.7h14.6l3 3v14.6H1.7z"/><path d="M5.2 1.9v5.6h9.6V1.9"/><path d="M5.2 19.2v-7.4h10.6v7.4"/></svg>
<svg style="left:58px;top:11px" width="20" height="22" viewBox="0 0 20 22" fill="none" stroke="#e6e4e2" stroke-width="1.3"><path d="M2 2.5v6.8h6.8"/><path d="M2.3 9c2.4-3.6 6-5.3 9.6-4.4 3.6.9 5.6 4.2 5 7.6-.5 3-3.3 5.6-8.4 8.3"/></svg>
<svg style="left:96px;top:11px" width="20" height="22" viewBox="0 0 20 22" fill="none" stroke="#6f6d6b" stroke-width="1.3"><path d="M18 2.5v6.8h-6.8"/><path d="M17.7 9c-2.4-3.6-6-5.3-9.6-4.4-3.6.9-5.6 4.2-5 7.6.5 3 3.3 5.6 8.4 8.3"/></svg>
<span class="t" style="left:126px;top:15.41px;font-size:14.6px;line-height:18.98px;color:#fff;letter-spacing:0.114px;">Dashboard company</span>
<span class="t" style="left:269.3px;top:18.12px;font-size:9.5px;line-height:12.35px;color:#fff;">•</span>
<span class="t" style="left:280.3px;top:15.41px;font-size:14.6px;line-height:18.98px;color:#fff;letter-spacing:-0.126px;">Last saved: Yesterday at 10:47 AM</span>
<svg style="left:509px;top:19px" width="13" height="8" viewBox="0 0 13 8"><path d="M1 1h11L6.5 7z" fill="#fff"/></svg>
<div style="left:855px;top:6px;width:500px;height:30px;background:#d6d5d3;border-radius:3px;"></div>
<svg style="left:874px;top:10px" width="24" height="24" viewBox="0 0 24 24" fill="none" stroke="#3b3a39" stroke-width="1.5"><circle cx="14" cy="9" r="6"/><path d="M9.6 13.4L2.5 20.5"/></svg>
<span class="t" style="left:911px;top:11.15px;font-size:17px;line-height:22.1px;color:#1f6b5c;letter-spacing:-0.375px;">Search</span>
<span class="t" style="left:1653px;top:12.15px;font-size:15px;line-height:19.5px;color:#fff;letter-spacing:-0.146px;">Sign in</span>
<svg style="left:1710px;top:8px" width="28" height="28" viewBox="0 0 28 28" fill="none" stroke="#2b2a29" stroke-width="1.5"><circle cx="13.5" cy="13.5" r="12.5" fill="#f3f2f1" stroke="none"/><circle cx="13.5" cy="7.7" r="3.6"/><path d="M6.3 15.2h14.4c0 4.4-3 7.3-7.2 7.3s-7.2-2.9-7.2-7.3z"/></svg>
<div style="left:1776.5px;top:21.6px;width:13px;height:1.4px;background:#fff;"></div>
<svg style="left:1830px;top:15px" width="16" height="16" viewBox="0 0 16 16" fill="none" stroke="#fff" stroke-width="1.4"><rect x="1.7" y="4" width="9.5" height="9.5" rx="2"/><path d="M4.3 4c0-1.5 1-2.4 2.3-2.4h4.7c1.6 0 2.5 1 2.5 2.5v4.7c0 1.3-.8 2.3-2.3 2.3"/></svg>
<svg style="left:1885px;top:15px" width="16" height="16" viewBox="0 0 16 16" fill="none" stroke="#fff" stroke-width="1.5"><path d="M2 2.3l12 12M14 2.3l-12 12"/></svg>
<div style="left:0px;top:43px;width:1920px;height:157px;background:#fafafa;"></div>
<div style="left:0px;top:199px;width:1920px;height:1px;background:#e3e1df;"></div>
<span class="t" style="left:28px;top:51.42px;font-size:17.2px;line-height:22.36px;color:#252423;letter-spacing:-0.568px;-webkit-text-stroke:.2px #252423;">File</span>
<span class="t" style="left:101px;top:51.42px;font-size:17.2px;line-height:22.36px;color:#252423;font-weight:700;letter-spacing:0.078px;">Home</span>
<span class="t" style="left:188px;top:51.42px;font-size:17.2px;line-height:22.36px;color:#252423;-webkit-text-stroke:.2px #252423;">Insert</span>
<span class="t" style="left:271px;top:51.42px;font-size:17.2px;line-height:22.36px;color:#252423;letter-spacing:0.607px;-webkit-text-stroke:.2px #252423;">Modeling</span>
<span class="t" style="left:384px;top:51.42px;font-size:17.2px;line-height:22.36px;color:#252423;letter-spacing:0.016px;-webkit-text-stroke:.2px #252423;">View</span>
<span class="t" style="left:460px;top:51.42px;font-size:17.2px;line-height:22.36px;color:#252423;letter-spacing:0.312px;-webkit-text-stroke:.2px #252423;">Optimize</span>
<span class="t" style="left:569px;top:51.42px;font-size:17.2px;line-height:22.36px;color:#252423;letter-spacing:0.547px;-webkit-text-stroke:.2px #252423;">Help</span>
<div style="left:101px;top:78px;width:48px;height:3px;background:#117865;border-radius:1px;"></div>
<div style="left:1808px;top:48px;width:105px;height:30px;background:#117865;border-radius:4px;"></div>
<svg style="left:1816px;top:52px" width="22" height="22" viewBox="0 0 22 22" fill="none" stroke="#fff" stroke-width="1.5" stroke-linejoin="miter"><path d="M1.5 6v12h14.3v-3.5"/><path d="M13.3 1.3l7 6-7 6v-3.5c-3.8 0-6.3 1.2-8.3 4.2.3-5.3 3.5-8.4 8.3-8.9z" stroke-linejoin="round"/></svg>
<span class="t" style="left:1847.3px;top:52.86px;font-size:15.6px;line-height:20.28px;color:#fff;letter-spacing:-1.231px;-webkit-text-stroke:.35px #fff;">Share</span>
<svg style="left:1887px;top:57px" width="16" height="12" viewBox="0 0 16 12" fill="none" stroke="#fff" stroke-width="1.6"><path d="M2 3l6 6 6-6"/></svg>
<div style="left:200px;top:88px;width:1px;height:110px;background:#d6d4d2;"></div>
<div style="left:649px;top:88px;width:1px;height:110px;background:#d6d4d2;"></div>
<div style="left:794px;top:88px;width:1px;height:110px;background:#d6d4d2;"></div>
<div style="left:1304px;top:88px;width:1px;height:110px;background:#d6d4d2;"></div>
<div style="left:1537px;top:88px;width:1px;height:110px;background:#d6d4d2;"></div>
<div style="left:1629px;top:88px;width:1px;height:110px;background:#d6d4d2;"></div>
<div style="left:1703px;top:88px;width:1px;height:110px;background:#d6d4d2;"></div>
<div style="left:1867px;top:88px;width:1px;height:110px;background:#d6d4d2;"></div>
<span class="t" style="left:73px;top:183.64px;font-size:12.4px;line-height:16.12px;color:#3b3a39;letter-spacing:0.119px;">Clipboard</span>
<span class="t" style="left:412px;top:183.64px;font-size:12.4px;line-height:16.12px;color:#3b3a39;letter-spacing:-0.396px;">Data</span>
<span class="t" style="left:701px;top:183.64px;font-size:12.4px;line-height:16.12px;color:#3b3a39;letter-spacing:-0.398px;">Queries</span>
<span class="t" style="left:1034px;top:183.64px;font-size:12.4px;line-height:16.12px;color:#3b3a39;">Insert</span>
<span class="t" style="left:1388px;top:183.64px;font-size:12.4px;line-height:16.12px;color:#3b3a39;letter-spacing:-0.045px;">Calculations</span>
<span class="t" style="left:1556px;top:183.64px;font-size:12.4px;line-height:16.12px;color:#3b3a39;letter-spacing:0.022px;">Sensitivity</span>
<span class="t" style="left:1651px;top:183.64px;font-size:12.4px;line-height:16.12px;color:#3b3a39;letter-spacing:-0.52px;">Share</span>
<span class="t" style="left:1765px;top:183.64px;font-size:12.4px;line-height:16.12px;color:#3b3a39;letter-spacing:0.404px;">Copilot</span>
<svg style="left:1900px;top:184px" width="14" height="10" viewBox="0 0 14 10" fill="none" stroke="#252423" stroke-width="1.7"><path d="M1.5 8l5.5-5.5L12.5 8"/></svg>
<span class="t" style="left:17px;top:137.21px;font-size:14.6px;line-height:18.98px;color:#b5b3b1;letter-spacing:-0.582px;-webkit-text-stroke:.2px #b5b3b1;">Paste</span>
<span class="t" style="left:90px;top:93.21px;font-size:14.6px;line-height:18.98px;color:#b5b3b1;letter-spacing:-0.359px;-webkit-text-stroke:.2px #b5b3b1;">Cut</span>
<span class="t" style="left:90px;top:123.21px;font-size:14.6px;line-height:18.98px;color:#b5b3b1;letter-spacing:-0.026px;-webkit-text-stroke:.2px #b5b3b1;">Copy</span>
<span class="t" style="left:90px;top:153.21px;font-size:14.6px;line-height:18.98px;color:#b5b3b1;letter-spacing:0.161px;-webkit-text-stroke:.2px #b5b3b1;">Format painter</span>
<span class="t" style="left:224px;top:137.21px;font-size:14.6px;line-height:18.98px;color:#252423;letter-spacing:-0.266px;-webkit-text-stroke:.2px #252423;">Get</span>
<span class="t" style="left:214px;top:157.71px;font-size:14.6px;line-height:18.98px;color:#252423;letter-spacing:-0.802px;-webkit-text-stroke:.2px #252423;">data</span>
<span class="t" style="left:280px;top:137.21px;font-size:14.6px;line-height:18.98px;color:#252423;letter-spacing:-0.922px;-webkit-text-stroke:.2px #252423;">Excel</span>
<span class="t" style="left:263px;top:157.71px;font-size:14.6px;line-height:18.98px;color:#252423;letter-spacing:0.504px;-webkit-text-stroke:.2px #252423;">workbook</span>
<span class="t" style="left:337px;top:137.21px;font-size:14.6px;line-height:18.98px;color:#252423;letter-spacing:-0.372px;-webkit-text-stroke:.2px #252423;">OneLake</span>
<span class="t" style="left:334px;top:157.71px;font-size:14.6px;line-height:18.98px;color:#252423;letter-spacing:-0.01px;-webkit-text-stroke:.2px #252423;">catalog</span>
<span class="t" style="left:411.3px;top:137.21px;font-size:14.6px;line-height:18.98px;color:#252423;letter-spacing:-1.6px;-webkit-text-stroke:.2px #252423;">SQL</span>
<span class="t" style="left:404px;top:157.71px;font-size:14.6px;line-height:18.98px;color:#252423;letter-spacing:-0.397px;-webkit-text-stroke:.2px #252423;">Server</span>
<span class="t" style="left:458px;top:137.21px;font-size:14.6px;line-height:18.98px;color:#252423;letter-spacing:-0.223px;-webkit-text-stroke:.2px #252423;">Enter</span>
<span class="t" style="left:460px;top:157.71px;font-size:14.6px;line-height:18.98px;color:#252423;letter-spacing:0.198px;-webkit-text-stroke:.2px #252423;">data</span>
<span class="t" style="left:502px;top:137.21px;font-size:14.6px;line-height:18.98px;color:#252423;letter-spacing:-0.189px;-webkit-text-stroke:.2px #252423;">Dataverse</span>
<span class="t" style="left:582px;top:137.21px;font-size:14.6px;line-height:18.98px;color:#252423;letter-spacing:-0.25px;-webkit-text-stroke:.2px #252423;">Recent</span>
<span class="t" style="left:571px;top:157.71px;font-size:14.6px;line-height:18.98px;color:#252423;letter-spacing:-0.352px;-webkit-text-stroke:.2px #252423;">sources</span>
<span class="t" style="left:662px;top:137.21px;font-size:14.6px;line-height:18.98px;color:#252423;letter-spacing:-0.119px;-webkit-text-stroke:.2px #252423;">Transform</span>
<span class="t" style="left:673px;top:157.71px;font-size:14.6px;line-height:18.98px;color:#252423;letter-spacing:-0.802px;-webkit-text-stroke:.2px #252423;">data</span>
<span class="t" style="left:733px;top:137.21px;font-size:14.6px;line-height:18.98px;color:#252423;letter-spacing:-0.518px;-webkit-text-stroke:.2px #252423;">Refresh</span>
<span class="t" style="left:815px;top:137.21px;font-size:14.6px;line-height:18.98px;color:#252423;letter-spacing:-0.102px;-webkit-text-stroke:.2px #252423;">New</span>
<span class="t" style="left:811px;top:157.71px;font-size:14.6px;line-height:18.98px;color:#252423;letter-spacing:-0.062px;-webkit-text-stroke:.2px #252423;">visual</span>
<span class="t" style="left:1193px;top:137.21px;font-size:14.6px;line-height:18.98px;color:#252423;letter-spacing:0.078px;-webkit-text-stroke:.2px #252423;">Text</span>
<span class="t" style="left:1195px;top:157.71px;font-size:14.6px;line-height:18.98px;color:#252423;letter-spacing:-0.266px;-webkit-text-stroke:.2px #252423;">box</span>
<span class="t" style="left:1244px;top:137.21px;font-size:14.6px;line-height:18.98px;color:#252423;letter-spacing:1.25px;-webkit-text-stroke:.2px #252423;">More</span>
<span class="t" style="left:1233px;top:157.71px;font-size:14.6px;line-height:18.98px;color:#252423;letter-spacing:-0.268px;-webkit-text-stroke:.2px #252423;">visuals</span>
<span class="t" style="left:1325px;top:137.21px;font-size:14.6px;line-height:18.98px;color:#b5b3b1;letter-spacing:0.16px;-webkit-text-stroke:.2px #b5b3b1;">New visual</span>
<span class="t" style="left:1318px;top:157.71px;font-size:14.6px;line-height:18.98px;color:#b5b3b1;letter-spacing:-0.097px;-webkit-text-stroke:.2px #b5b3b1;">calculation</span>
<span class="t" style="left:1421px;top:137.21px;font-size:14.6px;line-height:18.98px;color:#252423;letter-spacing:0.398px;-webkit-text-stroke:.2px #252423;">New</span>
<span class="t" style="left:1408px;top:157.71px;font-size:14.6px;line-height:18.98px;color:#252423;letter-spacing:-0.13px;-webkit-text-stroke:.2px #252423;">measure</span>
<span class="t" style="left:1478px;top:137.21px;font-size:14.6px;line-height:18.98px;color:#252423;letter-spacing:0.172px;-webkit-text-stroke:.2px #252423;">Quick</span>
<span class="t" style="left:1469px;top:157.71px;font-size:14.6px;line-height:18.98px;color:#252423;letter-spacing:-0.13px;-webkit-text-stroke:.2px #252423;">measure</span>
<span class="t" style="left:1550px;top:137.21px;font-size:14.6px;line-height:18.98px;color:#b5b3b1;letter-spacing:0.13px;-webkit-text-stroke:.2px #b5b3b1;">Sensitivity</span>
<span class="t" style="left:1642px;top:137.21px;font-size:14.6px;line-height:18.98px;color:#252423;letter-spacing:0.021px;-webkit-text-stroke:.2px #252423;">Publish</span>
<span class="t" style="left:1716px;top:137.21px;font-size:14.6px;line-height:18.98px;color:#252423;letter-spacing:0.232px;-webkit-text-stroke:.2px #252423;">Prep data for Copilot</span>
<span class="t" style="left:1752px;top:157.71px;font-size:14.6px;line-height:18.98px;color:#252423;letter-spacing:-0.797px;-webkit-text-stroke:.2px #252423;">AI</span>
<svg style="left:244px;top:165.5px" width="9" height="6" viewBox="0 0 9 6" fill="none" stroke="#252423" stroke-width="1.4"><path d="M1 1l3.5 3.5L8 1"/></svg>
<svg style="left:385px;top:165.5px" width="9" height="6" viewBox="0 0 9 6" fill="none" stroke="#252423" stroke-width="1.4"><path d="M1 1l3.5 3.5L8 1"/></svg>
<svg style="left:624px;top:165.5px" width="9" height="6" viewBox="0 0 9 6" fill="none" stroke="#252423" stroke-width="1.4"><path d="M1 1l3.5 3.5L8 1"/></svg>
<svg style="left:704px;top:165.5px" width="9" height="6" viewBox="0 0 9 6" fill="none" stroke="#252423" stroke-width="1.4"><path d="M1 1l3.5 3.5L8 1"/></svg>
<svg style="left:752px;top:165.5px" width="9" height="6" viewBox="0 0 9 6" fill="none" stroke="#252423" stroke-width="1.4"><path d="M1 1l3.5 3.5L8 1"/></svg>
<svg style="left:1280px;top:165.5px" width="9" height="6" viewBox="0 0 9 6" fill="none" stroke="#252423" stroke-width="1.4"><path d="M1 1l3.5 3.5L8 1"/></svg>
<svg style="left:1390px;top:165.5px" width="9" height="6" viewBox="0 0 9 6" fill="none" stroke="#b5b3b1" stroke-width="1.4"><path d="M1 1l3.5 3.5L8 1"/></svg>
<svg style="left:1579px;top:165.5px" width="9" height="6" viewBox="0 0 9 6" fill="none" stroke="#b5b3b1" stroke-width="1.4"><path d="M1 1l3.5 3.5L8 1"/></svg>
<div style="left:0px;top:200px;width:50px;height:850px;background:#f3f2f1;border-right:1px solid #e4e2e0;"></div>
<div style="left:0px;top:200px;width:3px;height:50px;background:#117865;"></div>
<div style="left:1880px;top:200px;width:40px;height:850px;background:#faf9f8;border-left:1px solid #e8e6e4;"></div>
<div style="left:1880px;top:1010px;width:40px;height:1px;background:#dcdad8;"></div>
<div style="left:50px;top:1005.5px;width:1830px;height:44.5px;background:#f3f2f1;"></div>
<div style="left:210px;top:1005px;width:378px;height:45px;background:#fff;"></div>
<div style="left:210px;top:1005px;width:1px;height:45px;background:#8a8886;"></div>
<div style="left:322px;top:1005px;width:1px;height:45px;background:#e1dfdd;"></div>
<div style="left:491px;top:1005px;width:1px;height:45px;background:#e1dfdd;"></div>
<div style="left:322px;top:1046px;width:170px;height:4px;background:#117865;"></div>
<div style="left:588px;top:1005px;width:48px;height:45px;background:#117865;"></div>
<div style="left:604px;top:1026px;width:15px;height:3px;background:#fff;"></div>
<div style="left:610px;top:1020px;width:3px;height:15px;background:#fff;"></div>
<span class="t" style="left:236px;top:1019.45px;font-size:15px;line-height:19.5px;color:#252423;letter-spacing:-0.217px;">Overview</span>
<span class="t" style="left:348px;top:1019.45px;font-size:15px;line-height:19.5px;color:#252423;letter-spacing:0.141px;-webkit-text-stroke:.35px #252423;">Orders &amp; Product</span>
<span class="t" style="left:479px;top:1010.25px;font-size:13px;line-height:16.9px;color:#252423;font-weight:700;">x</span>
<span class="t" style="left:518px;top:1019.45px;font-size:15px;line-height:19.5px;color:#252423;letter-spacing:-0.909px;">Page 1</span>
<svg style="left:64px;top:1014px" width="28" height="24" viewBox="0 0 28 24" fill="none" stroke="#3b3a39" stroke-width="1.6"><rect x="2" y="2" width="23" height="14"/><path d="M13.5 16v4.5M8.5 20.8h10"/></svg>
<div style="left:64px;top:1041px;width:30px;height:3px;background:#117865;border-radius:1.5px;"></div>
<svg style="left:124px;top:1011px" width="20" height="28" viewBox="0 0 20 28" fill="none" stroke="#3b3a39" stroke-width="1.6"><rect x="2" y="1.8" width="15" height="23.5" rx="2.5"/><path d="M8 21.5h3"/></svg>
<svg style="left:166px;top:1020px" width="10" height="14" viewBox="0 0 10 14"><path d="M8 1.5v11L2 7z" fill="#c8c6c4"/></svg>
<svg style="left:194px;top:1020px" width="10" height="14" viewBox="0 0 10 14"><path d="M2 1.5v11L8 7z" fill="#c8c6c4"/></svg>
<div style="left:0px;top:1050px;width:1920px;height:30px;background:#f3f2f1;border-top:1px solid #e1dfdd;"></div>
<div style="left:0px;top:1079px;width:1920px;height:1px;background:#4a4846;"></div>
<span class="t" style="left:5px;top:1057.91px;font-size:14.6px;line-height:18.98px;color:#484644;letter-spacing:-0.066px;">Page 2 of 3</span>
<span class="t" style="left:1656px;top:1055.3px;font-size:16px;line-height:20.8px;color:#484644;font-weight:700;">-</span>
<div style="left:1667px;top:1065px;width:125px;height:1px;background:#605e5c;"></div>
<div style="left:1718px;top:1058px;width:5px;height:14px;background:#605e5c;"></div>
<div style="left:1729px;top:1061px;width:1px;height:8px;background:#605e5c;"></div>
<div style="left:1799px;top:1065px;width:10px;height:1.5px;background:#484644;"></div>
<div style="left:1803.3px;top:1060.5px;width:1.5px;height:10px;background:#484644;"></div>
<span class="t" style="left:1825px;top:1056.21px;font-size:14.6px;line-height:18.98px;color:#605e5c;letter-spacing:-0.609px;">88%</span>
<svg style="left:1877px;top:1057px" width="22" height="17" viewBox="0 0 22 17" fill="none" stroke="#605e5c" stroke-width="1.3"><rect x=".700" y=".700" width="20.6" height="15.6"/><path d="M4 7V4h3.5M14.5 4H18v3M18 10v3h-3.5M7.5 13H4v-3"/></svg>
<svg style="left:1887px;top:1017px" width="26" height="26" viewBox="0 0 26 26" fill="none" stroke="#3b3a39" stroke-width="1.6" stroke-linejoin="round"><circle cx="13" cy="13" r="3.6"/><path d="M10.8 2.2h4.4l.7 3.1 2.1 1.2 3-1 2.2 3.8-2.3 2.2v2.4l2.3 2.2-2.2 3.8-3-1-2.1 1.2-.7 3.1h-4.4l-.7-3.1-2.1-1.2-3 1-2.2-3.8 2.3-2.2v-2.4L2.8 9.3 5 5.5l3 1 2.1-1.2z"/></svg>
<svg style="left:0;top:0" width="1920" height="210" viewBox="0 0 1920 210" fill="none" stroke-linejoin="miter"><rect x="22" y="101.3" width="25" height="28.8" fill="#fff8ea" stroke="#f3cfa3" stroke-width="2"/><path d="M26.5 105v-5h4.5c.3-3.5 1.8-5 4-5s3.7 1.5 4 5h4.5v5z" fill="#fafafa" stroke="#d0cecc" stroke-width="1.4"/><rect x="38.2" y="110.8" width="16" height="21.3" fill="#fafafa" stroke="#b9b7b5" stroke-width="2"/><path d="M71.5 93.5l7.5 15M79.5 93.5l-7.5 15" stroke="#a9a7a5" stroke-width="1.3"/><circle cx="71.3" cy="110.6" r="1.9" stroke="#9cc3e0" stroke-width="1.1"/><circle cx="79.2" cy="110.6" r="1.9" stroke="#9cc3e0" stroke-width="1.1"/><path d="M66 124h7l3.5 3.5M66 124v16.5h6" stroke="#b9b7b5" stroke-width="1.5"/><path d="M73 127.5h7.5l4 4v10.5h-11.5z" fill="#fafafa" stroke="#a9a7a5" stroke-width="1.6"/><path d="M80 127.5v4.5h4.5" stroke="#a9a7a5" stroke-width="1.1"/><path d="M76 135.5h6M76 138h6" stroke="#b9b7b5" stroke-width="1"/><path d="M66 162.5l7.5-4 7 7-6.5 6z" fill="#fde3c8" stroke="#f0b27a" stroke-width="1.2"/><path d="M74 158l3-2.5 6.5 6.5-2.5 3z" fill="#fafafa" stroke="#a9a7a5" stroke-width="1.5"/><path d="M79 157l4.5-3.5 1.5 1.5-3.5 4.5" stroke="#a9a7a5" stroke-width="1.6"/><ellipse cx="235.4" cy="100" rx="12.6" ry="4.3" stroke="#484644" stroke-width="1.4"/><path d="M222.8 100v25.5c0 2.2 4.5 4 11.5 4.4M248 100v13" stroke="#484644" stroke-width="1.4"/><rect x="236.3" y="113.5" width="19.2" height="19" fill="#fff" stroke="#484644" stroke-width="1.3"/><rect x="236.9" y="114.1" width="18" height="3.5" fill="#c8c6c4" stroke="none"/><path d="M236.3 118h19.2M236.3 122.8h19.2M236.3 127.6h19.2M242.7 118v14.5M249.1 118v14.5" stroke="#8a8886" stroke-width="1.2"/><path d="M284 96.2h17.5l8 8v11M284 96.2v33.6h14.5" stroke="#8a8886" stroke-width="1.5"/><path d="M301 96.5v8.5h8.5" stroke="#8a8886" stroke-width="1.2"/><rect x="298.3" y="115.1" width="17.6" height="17.6" rx="1.5" fill="#107c41"/><path d="M303.3 119.3l7.6 9.4M310.9 119.3l-7.6 9.4" stroke="#fff" stroke-width="1.9"/><circle cx="364.9" cy="114" r="16.3" stroke="#484644" stroke-width="1.5"/><path d="M355.7 102.9Q352 104.5 349.9 107.3A16.85 16.85 0 0 0 351.6 124.35L358.8 122.9C355 117 354.8 109.5 358.3 103.9C359.5 103.4 361.8 102 363.9 101.5C365.5 101 367.5 100.9 368.7 101C370.5 101.1 372.3 101.5 374 102.3C373 99.8 372 98.3 370.6 97.1C369 95.8 367.5 95.2 365.8 95.2C364 95.2 362.3 96 361 97.1C359 98.7 357 101 355.7 102.9Z" fill="#484644" stroke="#484644" stroke-width=".6" stroke-linejoin="round"/><path d="M359.2 104.5C361 110.5 364.5 116 369 119.8M358.7 123.1C362.5 123.5 366.3 122.5 369.2 119.9C372 117.2 374.5 115.6 377.4 115.4C378.8 115.6 379.8 116.5 380.5 117.8" stroke="#484644" stroke-width="1.4" stroke-linecap="round"/><path d="M410.8 96.2h16.5l8.5 8.5v5M410.8 96.2v33.6h16" stroke="#484644" stroke-width="1.5"/><path d="M427 96.5v9h9" stroke="#484644" stroke-width="1.2"/><path d="M428.2 113.5v16.5c0 1.6 3.3 2.8 7.5 2.8s7.5-1.2 7.5-2.8v-16.5" fill="#fff" stroke="#e07a10" stroke-width="1.4"/><ellipse cx="435.7" cy="113.5" rx="7.5" ry="2.8" fill="#fff" stroke="#e07a10" stroke-width="1.4"/><path d="M468 96h23.5v34h-35v-23" stroke="#484644" stroke-width="1.7"/><rect x="469" y="96.8" width="21.5" height="4" fill="#c8c6c4" stroke="none"/><path d="M467 108.5h24M456.5 119.5h35M468 108.5v21.5M479.5 101v29" stroke="#8a8886" stroke-width="1.3"/><path d="M463.5 92.5v19M454 102h19" stroke="#2e9e4f" stroke-width="2"/><path d="M523.5 105.5c3.5-4.5 9-7 15-7 8 0 13.5 3.8 13.5 10.5 0 8.5-8 16.5-17.5 16.5-2.5 0-4.5-.6-6-1.8" stroke="#484644" stroke-width="1.3"/><path d="M523.5 105.5c-4 4.5-6.8 10.5-6.5 15.5.2 3.5 2 5.5 4.8 5.5 3.2 0 5.7-2.5 7.2-6.5" stroke="#484644" stroke-width="1.3"/><path d="M529 120c-2.8-5.5 1-13.5 8.5-14.5 5.5-.7 8.8 2.8 8 7.5-.8 4.8-5 8.5-10 8.5-3.5 0-5.8-2-6.5-1.5z" stroke="#484644" stroke-width="1.3"/><path d="M541 111.5c-.8-2.3-3.5-3.3-6.2-2.3-3 1.1-4.6 4.2-3.6 6.8 1 2.5 4 3.3 6.8 2 1.6-.8 2.7-2 3.2-3.5" stroke="#484644" stroke-width="1.3"/><path d="M591 96.2h15.5l9.5 9.5v6M591 96.2v33.6h15" stroke="#484644" stroke-width="1.5"/><path d="M606 96.5v10h10" stroke="#484644" stroke-width="1.2"/><circle cx="614.5" cy="123.2" r="8.6" fill="#fff" stroke="#1a7fd1" stroke-width="1.5"/><path d="M614.3 117.5v6.2h5" stroke="#484644" stroke-width="1.3"/><rect x="678" y="96" width="34" height="34" stroke="#484644" stroke-width="1.7"/><rect x="679" y="97" width="32" height="4" fill="#c8c6c4" stroke="none"/><path d="M678 102h34" stroke="#484644" stroke-width="1.4"/><path d="M678 110.8h34M678 120h34M689 102v28M700.5 102v28" stroke="#8a8886" stroke-width="1.3"/><path d="M689.5 132.5l2.8-8 18.5-17.5c1.5-1 3.5.8 2.5 2.5l-17.5 19z" fill="#fff" stroke="#1a7fd1" stroke-width="1.4" stroke-linejoin="round"/><path d="M689.5 132.5l2.8-8c2 .3 3.8 2 4.4 4.4z" fill="#83beec" stroke="#1a7fd1" stroke-width="1"/><path d="M707.8 109.5l3.2 3.2" stroke="#1a7fd1" stroke-width="1.1"/><path d="M744 96.2h15.5l9.5 9.5v7M744 96.2v33.6h14" stroke="#484644" stroke-width="1.5"/><path d="M759 96.5v10h10" stroke="#484644" stroke-width="1.2"/><path d="M759.6 121.5a8.3 8.3 0 0 1 15.7-2.5M776 125.3a8.3 8.3 0 0 1-15.7 2.5" stroke="#2e9e4f" stroke-width="1.6"/><path d="M776.5 115.5v4.7h-5.2M759.1 131.3v-4.7h5.2" stroke="#2e9e4f" stroke-width="1.6"/><rect x="835.2" y="102" width="9.3" height="28.3" fill="#c8c6c4" stroke="#8a8886" stroke-width="1.3"/><rect x="825" y="96" width="10" height="34.3" fill="#fff" stroke="#484644" stroke-width="1.5"/><rect x="814.2" y="110" width="10.5" height="20.3" fill="#83beec" stroke="#1b6fb8" stroke-width="1.5"/><path d="M840.4 113.5v20M831 123.4h19" stroke="#fafafa" stroke-width="4.5"/><path d="M840.4 114v19M831 123.4h19" stroke="#2e9e4f" stroke-width="1.8"/><rect x="860.5" y="96.5" width="316" height="76" fill="#fff" stroke="#8a8886" stroke-width="1"/><rect x="1157" y="97" width="19" height="75" fill="#f6f6f6" stroke="none"/><path d="M1156.5 96.5v76" stroke="#8a8886" stroke-width="1"/><path d="M1161 136l4.3 4.3 4.3-4.3" stroke="#484644" stroke-width="1.5"/><g transform="translate(868 106)"><path d="M.8 0v19.4h19.2" stroke="#484644" stroke-width="1.5"/><rect x="1.5" y="2.6" width="3.8" height="5.6" fill="#fff" stroke="#8a8886" stroke-width="1"/><rect x="5.5" y="2.6" width="6.7" height="5.6" fill="#83beec" stroke="#1b6fb8" stroke-width="1.3"/><rect x="1.5" y="11.3" width="7" height="5.6" fill="#fff" stroke="#484644" stroke-width="1.2"/><rect x="8.5" y="11.3" width="9" height="5.6" fill="#c8c6c4" stroke="#8a8886" stroke-width="1.3"/></g><g transform="translate(901 106)"><path d="M.8 0v19.4h19.2" stroke="#484644" stroke-width="1.5"/><rect x="3" y="6.5" width="5.4" height="8" fill="#83beec" stroke="#1b6fb8" stroke-width="1.3"/><rect x="3" y="14.5" width="5.4" height="5" fill="#fff" stroke="#484644" stroke-width="1.2"/><rect x="11.8" y="2.6" width="5.4" height="9" fill="#c8c6c4" stroke="#8a8886" stroke-width="1.3"/><rect x="11.8" y="11.6" width="5.4" height="8" fill="#fff" stroke="#484644" stroke-width="1.2"/></g><g transform="translate(933 106)"><path d="M.8 0v19.4h19.2" stroke="#484644" stroke-width="1.5"/><rect x="1.5" y="2.6" width="17" height="5.6" fill="#83beec" stroke="#1b6fb8" stroke-width="1.3"/><rect x="1.5" y="11.3" width="12" height="5.3" fill="#fff" stroke="#484644" stroke-width="1.3"/></g><g transform="translate(966 106)"><path d="M.8 0v19.4h19.2" stroke="#484644" stroke-width="1.5"/><rect x="4.3" y="1.5" width="5.4" height="18" fill="#83beec" stroke="#1b6fb8" stroke-width="1.3"/><rect x="12.3" y="6.8" width="5.2" height="12.7" fill="#fff" stroke="#484644" stroke-width="1.3"/></g><g transform="translate(998 106)"><path d="M1.5 1v18h18" stroke="#484644" stroke-width="1"/><rect x="4.5" y="3.5" width="4" height="11" fill="#83beec" stroke="#1b6fb8" stroke-width="1.1"/><rect x="13" y="3.5" width="3.6" height="4.6" fill="#c8c6c4" stroke="#8a8886" stroke-width="1"/><path d="M4.5 14.5v4.5M8.5 14.5v4.5M13 8v11M16.6 8v11" stroke="#484644" stroke-width="1"/><path d="M1.8 17.5l5.5-7.5 4.5 5.5 7.3-7.3" stroke="#484644" stroke-width="1.3"/></g><g transform="translate(1031 106)"><path d="M.8 0v19.4h19.2" stroke="#484644" stroke-width="1.5"/><rect x="2.8" y="8" width="5.5" height="11.4" fill="#83beec" stroke="#1b6fb8" stroke-width="1.3"/><rect x="8.3" y="1.8" width="5.5" height="17.6" fill="#fff" stroke="#484644" stroke-width="1.3"/><rect x="13.8" y="6" width="4.7" height="13.4" fill="#c8c6c4" stroke="#8a8886" stroke-width="1.2"/><path d="M1.5 18l6.5-8.5 5 6 7-6.5" stroke="#484644" stroke-width="1.3"/></g><g transform="translate(1063 106)"><path d="M.8 0v19.4h19.2" stroke="#484644" stroke-width="1.5"/><path d="M1.5 16l12-12 6 7" stroke="#1b6fb8" stroke-width="1.3"/><path d="M1.5 12.5l6-6.5 6 5 6-6.5" stroke="#484644" stroke-width="1.4"/></g><g transform="translate(1096 106)"><path d="M14 9l2-8 3.8 9v9.4h-8z" fill="#c8c6c4" stroke="#8a8886" stroke-width="1"/><path d="M.8 12l5.8-10 6 8.5" stroke="#484644" stroke-width="1.3"/><path d="M.8 13l4.8 4.5 6.8-9.5 7.4 11.4h-19z" fill="#83beec" stroke="#1b6fb8" stroke-width="1.3"/></g><g transform="translate(1128 106)"><path d="M.8 0v19.4h19.2" stroke="#484644" stroke-width="1.5"/><rect x="15" y="1.5" width="2.6" height="2.6" fill="#484644"/><rect x="3.5" y="13.5" width="3" height="3" fill="#484644"/><rect x="3.5" y="5.5" width="2.8" height="2.4" fill="#83beec"/><rect x="8.5" y="8.3" width="3.3" height="3.2" fill="#83beec"/><rect x="15" y="12.5" width="2.6" height="2.6" fill="#83beec"/></g><g transform="translate(868 143)"><rect x=".8" y=".8" width="18.7" height="18.4" fill="#f8f8f8" stroke="#484644" stroke-width="1.4"/><rect x="1.5" y="1.5" width="17.3" height="3" fill="#c8c6c4"/><rect x="4.8" y="7" width="3" height="3" stroke="#8a8886" stroke-width="1"/><rect x="4.8" y="13" width="3" height="3" stroke="#8a8886" stroke-width="1"/><path d="M9.5 10h10.3l-4.3 5v4.8h-2.7v-4.8z" fill="#fff" stroke="#484644" stroke-width="1.4"/></g><g transform="translate(901 143)"><circle cx="10" cy="10" r="9.3" fill="#f8f8f8" stroke="#484644" stroke-width="1.3"/><path d="M10 10V.7a9.3 9.3 0 0 1 6.3 16.2z" fill="#83beec" stroke="#1b6fb8" stroke-width="1.3"/></g><g transform="translate(933 143)"><circle cx="10" cy="10" r="9" stroke="#484644" stroke-width="1.1"/><circle cx="10" cy="10" r="4.3" stroke="#484644" stroke-width="1.1"/><path d="M10 1a9 9 0 0 1 6.4 15.4l-3.3-3.3A4.3 4.3 0 0 0 10 5.7z" fill="#83beec" stroke="#1b6fb8" stroke-width="1.2"/></g><g transform="translate(966 143)"><rect x=".8" y=".8" width="18.7" height="18.4" fill="#fff" stroke="#484644" stroke-width="1.3"/><path d="M10 6h9.5M14 6v13M14 13h5.5" stroke="#484644" stroke-width="1.3"/><rect x=".8" y=".8" width="9.2" height="18.4" fill="#83beec" stroke="#1b6fb8" stroke-width="1.4"/><path d="M.8 10h9.2" stroke="#1b6fb8" stroke-width="1.4"/></g><g transform="translate(998 143)"><path d="M10.9 .400A8.6 8.6 0 1 0 17.64 13.83" stroke="#484644" stroke-width="1.5"/><circle cx="11.3" cy="8.3" r="5.7" fill="#fff" stroke="#484644" stroke-width="1.2"/><path d="M10.4 3.4l3.2.4 1.4 2-2.2 1.6-2.8-.6-.9-2zM9.7 8.9l3 .6 2 1.6-1.2 2.4-2.4.2-1-2.2zM7.1 7.1l1.4 1-.2 2.2-1.2-.8z" fill="#2e9e4f"/><path d="M10.5 17.5v1.7M3.5 19.2h14.3" stroke="#484644" stroke-width="1.5"/></g><g transform="translate(1031 143)"><path d="M.8 14.2a9.3 9.3 0 0 1 18.6 0h-4a5.3 5.3 0 0 0-10.6 0z" fill="#fff" stroke="#484644" stroke-width="1.2"/><path d="M7.5 5.3a9.3 9.3 0 0 1 11.9 8.9h-4a5.3 5.3 0 0 0-6.5-5.2z" fill="#83beec" stroke="#1b6fb8" stroke-width="1.3"/><path d="M9.5 13.5l5-5" stroke="#484644" stroke-width="1.2"/><circle cx="9.7" cy="13.4" r="1.2" fill="#484644"/></g><g transform="translate(1063 143)"><path d="M9.5 2.8h9.7v14.2h-18.7v-7" stroke="#484644" stroke-width="1.4"/><path d="M3 14.8h13.5" stroke="#8a8886" stroke-width="1"/><path d="M2.8 -.5h5.7l-2.8 4h3l-8 7.3 2.6-5.6h-2.8z" fill="#f6b24a" stroke="#e07a10" stroke-width=".9" stroke-linejoin="round"/></g><text x="1067.8" y="155.4" font-family="Liberation Sans, sans-serif" font-size="10" fill="#1a85d6" stroke="none" letter-spacing="-.7">123</text><g transform="translate(1096 143)"><rect x=".8" y=".8" width="18.7" height="18.4" fill="#fff" stroke="#484644" stroke-width="1.4"/><rect x="1.5" y="1.5" width="17.3" height="3" fill="#c8c6c4"/><path d="M.8 5h18.7" stroke="#484644" stroke-width="1"/><path d="M.8 9.8h18.7M.8 14.5h18.7M6.8 5v14M13.2 5v14" stroke="#8a8886" stroke-width="1.3"/></g><g transform="translate(1128 143)"><rect x=".8" y=".8" width="18.7" height="18.4" fill="#fff" stroke="#484644" stroke-width="1.4"/><rect x="1.5" y="1.5" width="17.3" height="3" fill="#c8c6c4"/><rect x="13.2" y="5" width="5.8" height="14" fill="#83beec"/><rect x="1.3" y="14.5" width="17.7" height="4.5" fill="#83beec"/><path d="M.8 5h18.7" stroke="#484644" stroke-width="1"/><path d="M.8 9.8h12M6.8 5v9.5" stroke="#8a8886" stroke-width="1.3"/><path d="M13.2 5v14M.8 14.5h18.7M13.2 9.8h6M6.8 14.5v4.5" stroke="#1b6fb8" stroke-width="1.3"/></g><rect x="1189" y="98.5" width="36" height="29" stroke="#484644" stroke-width="1.3"/><rect x="1187" y="96.5" width="4" height="4" fill="#1a85d6" stroke="none"/><rect x="1223" y="96.5" width="4" height="4" fill="#1a85d6" stroke="none"/><rect x="1187" y="125.5" width="4" height="4" fill="#1a85d6" stroke="none"/><rect x="1223" y="125.5" width="4" height="4" fill="#1a85d6" stroke="none"/><path d="M1200 121.5l7-17 7 17M1202.5 115.5h9" stroke="#1a85d6" stroke-width="1.5"/><path d="M1247.3 130v-20h10M1257.3 130v-34h10v34M1267.3 102h10v28M1247.3 130h30" stroke="#484644" stroke-width="1.5"/><path d="M1257.5 132.5l2.8-8 18.5-17c1.5-1 3.5.8 2.5 2.5l-17.5 18.5z" fill="#fff" stroke="#1a7fd1" stroke-width="1.4" stroke-linejoin="round"/><path d="M1257.5 132.5l2.8-8c2 .3 3.8 2 4.4 4.4z" fill="#83beec" stroke="#1a7fd1" stroke-width="1"/><path d="M1275.8 110l3.2 3.2" stroke="#1a7fd1" stroke-width="1.1"/><rect x="1344.5" y="109.7" width="11" height="20.6" fill="#e4e3e1" stroke="#cfcdcb" stroke-width="1.2"/><path d="M1355.5 130.3v-34.3h10.5v13" stroke="#bdbbb9" stroke-width="1.4"/><path d="M1366 102.5h9.5v9h-9.5z" fill="#d3e6f5" stroke="#b5d3ea" stroke-width="1"/><text x="1360" y="128.5" font-family="Liberation Serif, serif" font-style="italic" font-size="25" fill="#b1afad" stroke="none" letter-spacing="-1.2">fx</text><rect x="1423.3" y="96" width="24" height="34" fill="#fff" stroke="#484644" stroke-width="1.6"/><rect x="1427.3" y="99.5" width="16" height="5.3" fill="#83beec" stroke="#1b6fb8" stroke-width="1.1"/><rect x="1427.4" y="108.3" width="3.4" height="3.4" fill="#2b2b2b" stroke="none"/><rect x="1427.4" y="115.7" width="3.4" height="3.4" fill="#2b2b2b" stroke="none"/><rect x="1427.4" y="123.2" width="3.4" height="3.4" fill="#2b2b2b" stroke="none"/><rect x="1433.8" y="108.3" width="3.4" height="3.4" fill="#2b2b2b" stroke="none"/><rect x="1433.8" y="115.7" width="3.4" height="3.4" fill="#2b2b2b" stroke="none"/><rect x="1433.8" y="123.2" width="3.4" height="3.4" fill="#2b2b2b" stroke="none"/><rect x="1440.1" y="108.3" width="3.4" height="3.4" fill="#2b2b2b" stroke="none"/><rect x="1440.1" y="115.7" width="3.4" height="3.4" fill="#2b2b2b" stroke="none"/><rect x="1440.1" y="123.2" width="3.4" height="3.4" fill="#2b2b2b" stroke="none"/><rect x="1484.5" y="96" width="24" height="34" fill="#fff" stroke="#484644" stroke-width="1.6"/><rect x="1488.5" y="99.5" width="16" height="5.3" fill="#c8c6c4" stroke="#8a8886" stroke-width="1.1"/><rect x="1488.6" y="108.3" width="3.4" height="3.4" fill="#2b2b2b" stroke="none"/><rect x="1488.6" y="115.7" width="3.4" height="3.4" fill="#2b2b2b" stroke="none"/><rect x="1488.6" y="123.2" width="3.4" height="3.4" fill="#2b2b2b" stroke="none"/><rect x="1495.0" y="108.3" width="3.4" height="3.4" fill="#2b2b2b" stroke="none"/><rect x="1495.0" y="115.7" width="3.4" height="3.4" fill="#2b2b2b" stroke="none"/><rect x="1495.0" y="123.2" width="3.4" height="3.4" fill="#2b2b2b" stroke="none"/><rect x="1501.3" y="108.3" width="3.4" height="3.4" fill="#2b2b2b" stroke="none"/><rect x="1501.3" y="115.7" width="3.4" height="3.4" fill="#2b2b2b" stroke="none"/><rect x="1501.3" y="123.2" width="3.4" height="3.4" fill="#2b2b2b" stroke="none"/><path d="M1484 93.3h9l-5.5 9h5.5l-15.5 15.5 5-11.5h-5.5z" fill="#f8cf73" stroke="#e07a10" stroke-width="1.1" stroke-linejoin="round"/><path d="M1585 96.2h-14.7v34h26.3v-17" stroke="#a9d1ea" stroke-width="1.3"/><g transform="rotate(45 1590 108)"><rect x="1585" y="92" width="10" height="9" stroke="#a9d1ea" stroke-width="1.2" fill="#fafafa"/><rect x="1582" y="101" width="16" height="5" fill="#a9d1ea" stroke="#a9d1ea" stroke-width="1"/><rect x="1584.5" y="106" width="11" height="4" stroke="#a9d1ea" stroke-width="1.2" fill="#fafafa"/></g><g transform="rotate(-45 1583 114)"><rect x="1579" y="106" width="7.5" height="17" stroke="#a9d1ea" stroke-width="1.2" fill="#fafafa"/><rect x="1581.3" y="109" width="3" height="11" stroke="#a9d1ea" stroke-width="1"/></g><path d="M1666 110v-10.5c0-2 1.2-3.2 3.2-3.2h5.6c2 0 3.2 1.2 3.2 3.2v11" stroke="#484644" stroke-width="1.5"/><path d="M1659.7 116v-6.5c0-2 1.2-3.2 3.2-3.2h5.6c2 0 3.2 1.2 3.2 3.2v20" stroke="#484644" stroke-width="1.5"/><rect x="1653.2" y="116.3" width="12" height="13.3" rx="2.8" stroke="#484644" stroke-width="1.5"/><path d="M1665 129.6h10.5" stroke="#484644" stroke-width="1.5"/><path d="M1677.8 132.5v-18.5M1670.3 121.4l7.5-7.4 7.5 7.4" stroke="#1a6fb8" stroke-width="1.5"/><path d="M1758 101.3h-12.3v9.7h23" stroke="#484644" stroke-width="1.4"/><rect x="1745.7" y="114.8" width="26.6" height="10" stroke="#484644" stroke-width="1.4"/><rect x="1748.8" y="104.3" width="4.3" height="4.3" fill="#484644" stroke="none"/><rect x="1765" y="117.7" width="4.3" height="4.3" fill="#484644" stroke="none"/><path d="M1765.3 95.7c.8 3.7 2 5 5.8 5.8-3.8.8-5 2.1-5.8 5.8-.8-3.7-2-5-5.8-5.8 3.8-.8 5-2.1 5.8-5.8zM1772.7 105.5c.5 2.3 1.3 3.1 3.6 3.6-2.3.5-3.1 1.3-3.6 3.6-.5-2.3-1.3-3.1-3.6-3.6 2.3-.5 3.1-1.3 3.6-3.6z" stroke="#1a7fd1" stroke-width="1.1" stroke-linejoin="round"/><defs><linearGradient id="cpA" x1="0" y1="0" x2="0" y2="1"><stop offset="0" stop-color="#25b5fb"/><stop offset=".3" stop-color="#1290df"/><stop offset=".6" stop-color="#56b36c"/><stop offset=".9" stop-color="#e8c814"/><stop offset="1" stop-color="#f0c40e"/></linearGradient>
<linearGradient id="cpB" x1=".7" y1="0" x2=".3" y2="1"><stop offset="0" stop-color="#a550ee"/><stop offset=".5" stop-color="#f0588c"/><stop offset="1" stop-color="#ffa24e"/></linearGradient>
<linearGradient id="cpC" x1="0" y1="0" x2="1" y2="1"><stop offset="0" stop-color="#0a2fc4"/><stop offset="1" stop-color="#1f7fe0"/></linearGradient>
<linearGradient id="cpD" x1="0" y1="0" x2="1" y2="1"><stop offset="0" stop-color="#ff6a3a"/><stop offset="1" stop-color="#d8352f"/></linearGradient></defs><path d="M1819.5 96.6h13.8l-.8 1-6.7 23.4h-9c-3.3 0-5.2-2.3-4.4-5.6l3.4-13.8c.7-3 2-5 3.7-5z" fill="url(#cpA)" stroke="none"/><path d="M1831.5 97.5c1.6-.7 3.8-.9 6-.7 1.5.5 2.5 1.8 3.2 3.7l1.4 4.2h-6l-5.3-.8z" fill="url(#cpC)" stroke="none"/><path d="M1836.3 104.7h9.8c3 0 4.4 2 3.6 4.9l-3.7 14.4c-.9 3.3-2.7 5-5.3 5h-14.3l3-2.4z" fill="url(#cpB)" stroke="none"/><path d="M1820.6 121.1h10.4l-1.5 5.3c-.6 1.6-1.6 2.5-3 2.6-1.6.1-3-.8-3.8-2.4z" fill="url(#cpD)" stroke="none"/><path d="M1832 105.3h4.3l-5.4 15.2h-4.8z" fill="#fdfdfd" stroke="none"/></svg>
<svg style="left:0;top:200px" width="50" height="260" viewBox="0 200 50 260" fill="none"><path d="M17 216v15.8h17.5" stroke="#252423" stroke-width="1.4"/><rect x="20" y="221" width="3" height="9" stroke="#252423" stroke-width="1.2"/><rect x="25" y="223.5" width="3" height="6.5" stroke="#252423" stroke-width="1.2"/><rect x="30" y="218" width="3" height="12" stroke="#252423" stroke-width="1.2"/><rect x="15.7" y="265.5" width="19.6" height="17" stroke="#8a8886" stroke-width="1.4"/><path d="M15.7 270h19.6M15.7 274.3h19.6M15.7 278.5h19.6M22.3 270v12.5M28.8 270v12.5" stroke="#8a8886" stroke-width="1.2"/><path d="M15.7 267.5h19.6" stroke="#8a8886" stroke-width="1.2"/><rect x="14.8" y="319" width="9" height="8.5" stroke="#8a8886" stroke-width="1.3"/><rect x="26.8" y="313.5" width="8.5" height="8.5" stroke="#8a8886" stroke-width="1.3"/><rect x="26.8" y="325" width="8.5" height="9.5" stroke="#8a8886" stroke-width="1.3"/><path d="M14.8 322h9M26.8 316.5h8.5M26.8 328h8.5M23.8 321.5h3M21 327.5v3.5h5.8" stroke="#8a8886" stroke-width="1.2"/><path d="M19.3 376v-10.5h7l4.5 4.5v3" stroke="#8a8886" stroke-width="1.3"/><path d="M26 365.8v4.5h4.5" stroke="#8a8886" stroke-width="1"/><path d="M30.8 372c1.5 2.5 1.3 7.5-1 10" stroke="#8a8886" stroke-width="1.2"/><path d="M19.3 426v-10.5h7l4.5 4.5v6" stroke="#8a8886" stroke-width="1.3"/><path d="M26 415.8v4.5h4.5" stroke="#8a8886" stroke-width="1"/><text x="12.6" y="384.3" font-family="Liberation Sans, sans-serif" font-size="8.6" font-weight="700" fill="#7a7876" letter-spacing="0">DAX</text><text x="13.5" y="434.3" font-family="Liberation Sans, sans-serif" font-size="8.6" font-weight="700" fill="#7a7876" letter-spacing="0">TMDL</text></svg>
<svg style="left:1880px;top:200px" width="40" height="290" viewBox="1880 200 40 290" fill="none"><ellipse cx="1900.3" cy="213.5" rx="8.3" ry="4.2" stroke="#484644" stroke-width="1.4"/><path d="M1892 213.5v13.5c0 2.3 3.7 4.2 8.3 4.2s8.3-1.9 8.3-4.2v-13.5" stroke="#484644" stroke-width="1.4"/><path d="M1890.3 271v-13.5h6M1896.3 271v-21.5h6.5v7.5M1902.8 254.5h5.5v4M1890.3 271h10" stroke="#484644" stroke-width="1.4"/><path d="M1901.5 261v8.5c0 1.3 2.5 2.3 5.5 2.3s5.5-1 5.5-2.3v-8.5" fill="#fff" stroke="#e07a10" stroke-width="1.3"/><ellipse cx="1907" cy="261" rx="5.5" ry="2.3" fill="#fff" stroke="#e07a10" stroke-width="1.3"/><path d="M1890.3 308v-10.5h6M1896.3 303v-13.5h6.5v8M1902.8 294.5h5.5v3" stroke="#484644" stroke-width="1.4"/><path d="M1911.5 297l-8.5 9.5" stroke="#484644" stroke-width="2.6" stroke-linecap="round"/><path d="M1911.3 297.2l-8 9" stroke="#fff" stroke-width=".9" stroke-linecap="round"/><path d="M1894 311.5c3-.2 4-1.8 4.5-4 .5-1.8 3-2.5 4.5-1s1 4-1 5.2c-2.3 1.3-5.5 1.3-8-.2z" fill="#3c8fe0" stroke="#1a6fb8" stroke-width=".8"/><path d="M1906.5 337v-7.5h-14.5v21.5h10" stroke="#484644" stroke-width="1.4"/><path d="M1895.5 347v-6h2.5v6zM1899.5 347v-12h2.8v4" stroke="#a19f9d" stroke-width="1.2"/><circle cx="1907.3" cy="346" r="5.3" fill="#fff" stroke="#1a7fd1" stroke-width="1.3"/><path d="M1907.3 343v3.3h2.5M1905.5 339h3.6M1907.3 339v1.5" stroke="#1a7fd1" stroke-width="1.1"/><path d="M1893.7 369.5h13v21l-6.5-5.5-6.5 5.5z" stroke="#484644" stroke-width="1.4"/><path d="M1904 411h8.5v7M1906 415h4M1890.5 424v6.5h13.5M1894 426.5h8" stroke="#484644" stroke-width="1.3"/><path d="M1889.3 414.5a6 6 0 0 1 10.8-2.3M1901 418.5a6 6 0 0 1-10.8 2.3" stroke="#2e9e4f" stroke-width="1.5"/><path d="M1900.8 408.5v4h-4M1889.5 424.5v-4h4" stroke="#2e9e4f" stroke-width="1.5"/><path d="M1901 419.5h12.3l-4.8 5.5v6.5h-2.7v-6.5z" fill="#fff" stroke="#484644" stroke-width="1.4"/><path d="M1900 448v21M1889.5 458.5h21" stroke="#201f1e" stroke-width="1.7"/></svg>
</div></body></html>
